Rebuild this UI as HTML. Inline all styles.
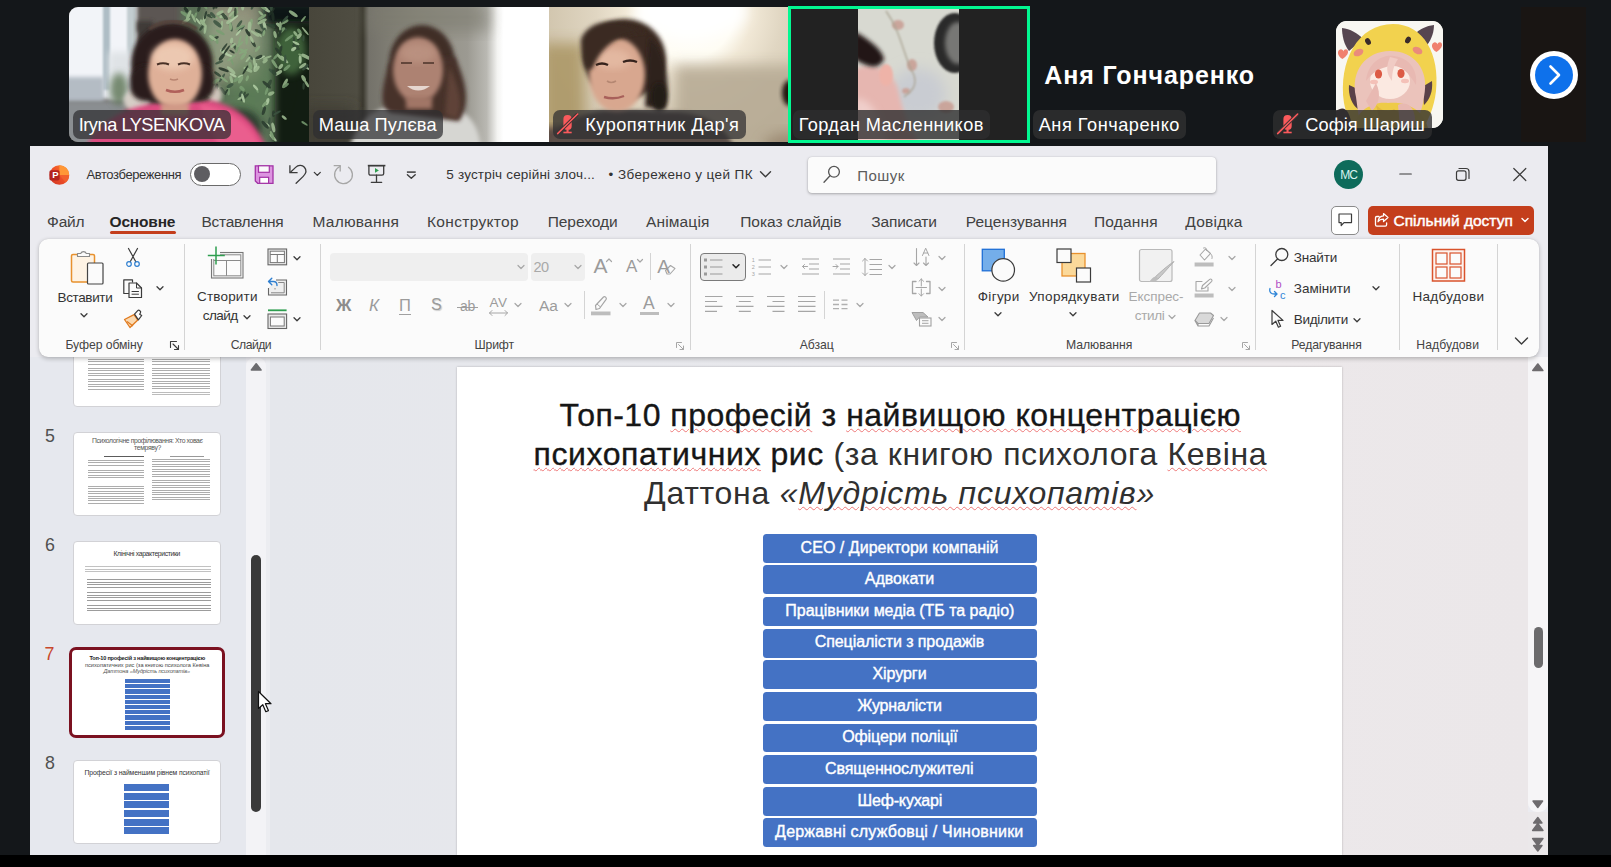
<!DOCTYPE html>
<html lang="uk">
<head>
<meta charset="utf-8">
<title>Zoom – PowerPoint</title>
<style>
*{box-sizing:border-box;margin:0;padding:0}
html,body{width:1611px;height:867px;overflow:hidden;background:#14171a;font-family:"Liberation Sans",sans-serif;color:#262626}
#stage{position:absolute;left:0;top:0;width:1611px;height:867px;overflow:hidden;background:#14171a}
.a{position:absolute}
.t{position:absolute;white-space:nowrap;line-height:1;transform-origin:0 0}
svg{position:absolute;overflow:visible}
/* ---------- video strip ---------- */
.tile{position:absolute;top:7px;height:135px;width:240px;overflow:hidden}
.tile svg{left:0;top:0}
.nm{position:absolute;top:110px;height:29px;border-radius:7px;background:rgba(46,46,48,.72)}
.nmt{color:#fff;font-size:19px}
/* ---------- ppt window ---------- */
#ppt{position:absolute;left:0;top:0;width:1611px;height:867px}
#pptbg{position:absolute;left:30px;top:146px;width:1518px;height:709px;background:#ebebf0}
#bottombar{position:absolute;left:0;top:855px;width:1611px;height:12px;background:#000}
.tab{font-size:15.5px;color:#414141}
.rl{font-size:13.5px;color:#333}
.gl{font-size:12px;color:#444}
.dis{color:#a9a9a9}
.sep{position:absolute;width:1px;background:#d4d4d4}
.ic{stroke:#3b3b3b;fill:none;stroke-width:1.1;stroke-linecap:round;stroke-linejoin:round}
.icg{stroke:#a6a6a6;fill:none;stroke-width:1.1;stroke-linecap:round;stroke-linejoin:round}
.chev{stroke:#3b3b3b;fill:none;stroke-width:1.3;stroke-linecap:round;stroke-linejoin:round}
.chevg{stroke:#a6a6a6;fill:none;stroke-width:1.2;stroke-linecap:round;stroke-linejoin:round}
.thumb{position:absolute;left:72.500px;width:148.500px;background:#fff;border:1px solid #d2d2d6;border-radius:4px;overflow:hidden}
.sn{font-size:17px;color:#505050}
.bar{position:absolute;left:763px;width:274px;height:28.9px;border-radius:3.5px;background:#4472c4}
.bt{color:#fff;font-size:16px;-webkit-text-stroke:.4px #fff}
.h1{font-size:32px;color:#161616}
.wv{text-decoration:underline wavy #e77;text-decoration-thickness:.9px;text-underline-offset:1.800px}
</style>
</head>
<body>
<div id="stage">
<!-- ================= VIDEO STRIP ================= -->
<svg width="0" height="0" style="left:0;top:0">
<defs>
<filter id="b2" x="-20%" y="-20%" width="140%" height="140%"><feGaussianBlur stdDeviation="2"/></filter>
<filter id="b3" x="-20%" y="-20%" width="140%" height="140%"><feGaussianBlur stdDeviation="3.5"/></filter>
<filter id="b6" x="-30%" y="-30%" width="160%" height="160%"><feGaussianBlur stdDeviation="7"/></filter>
<filter id="b05" x="-20%" y="-20%" width="140%" height="140%"><feGaussianBlur stdDeviation=".6"/></filter>
<filter id="b1" x="-20%" y="-20%" width="140%" height="140%"><feGaussianBlur stdDeviation="1"/></filter>
</defs>
</svg>

<!-- tile 1 : Iryna -->
<div class="tile" style="left:69px;border-radius:9px 0 0 9px;background:#6b6a62">
<svg width="240" height="135" viewBox="0 0 240 135">
<rect width="240" height="135" fill="#5c5753"/>
<!-- window -->
<rect x="-5" y="-5" width="77" height="97" fill="#f2f4f8" filter="url(#b2)"/>
<rect x="34" y="-5" width="7" height="88" fill="#aebdc5" filter="url(#b1)"/>
<rect x="58" y="-5" width="9" height="70" fill="#c3cdd0" filter="url(#b1)"/>
<rect x="40" y="45" width="26" height="50" fill="#dfe3e6" filter="url(#b3)"/>
<rect x="-5" y="70" width="40" height="26" fill="#b4bcc4" filter="url(#b2)"/>
<rect x="-5" y="94" width="62" height="45" fill="#8a8e91" filter="url(#b2)"/>
<ellipse cx="50" cy="82" rx="9" ry="16" fill="#5b7353" filter="url(#b3)" opacity=".8"/>
<!-- wall / cabinet behind -->
<rect x="68" y="-5" width="72" height="30" fill="#5b5753" filter="url(#b2)"/>
<rect x="68" y="14" width="16" height="36" fill="#3f3b39" filter="url(#b2)"/>
<!-- plant -->
<rect x="112" y="-5" width="135" height="145" fill="#5a6f56" filter="url(#b3)"/>
<rect x="140" y="-5" width="50" height="80" fill="#a89c8a" filter="url(#b6)" opacity=".75"/>
<ellipse cx="160" cy="38" rx="36" ry="30" fill="#8aa482" opacity=".5" filter="url(#b6)"/>
<ellipse cx="186" cy="82" rx="28" ry="32" fill="#5d8258" opacity=".6" filter="url(#b6)"/>
<rect x="196" y="-5" width="55" height="22" fill="#0f1612" filter="url(#b3)"/>
<rect x="206" y="14" width="45" height="130" fill="#0c1411" filter="url(#b3)" opacity=".92"/>
<ellipse cx="222" cy="44" rx="15" ry="24" fill="#4f7a4a" opacity=".75" filter="url(#b3)"/>
<ellipse cx="170" cy="120" rx="22" ry="18" fill="#1c2c22" opacity=".75" filter="url(#b3)"/>
<g filter="url(#b05)" opacity=".85"><ellipse cx="152.8" cy="18.2" rx="4.6" ry="1.1" fill="#9dbb90" transform="rotate(95 152.8 18.2)"/><ellipse cx="226.6" cy="26.8" rx="3.2" ry="1.4" fill="#9dbb90" transform="rotate(54 226.6 26.8)"/><ellipse cx="216.2" cy="14.6" rx="3.6" ry="1.6" fill="#7a9e72" transform="rotate(153 216.2 14.6)"/><ellipse cx="182.1" cy="15.8" rx="4.0" ry="1.5" fill="#86a97c" transform="rotate(100 182.1 15.8)"/><ellipse cx="135.7" cy="11.1" rx="4.8" ry="1.5" fill="#a4c097" transform="rotate(107 135.7 11.1)"/><ellipse cx="165.9" cy="40.1" rx="4.5" ry="1.4" fill="#314634" transform="rotate(62 165.9 40.1)"/><ellipse cx="174.4" cy="44.0" rx="4.1" ry="1.5" fill="#86a97c" transform="rotate(30 174.4 44.0)"/><ellipse cx="207.4" cy="18.4" rx="4.2" ry="1.0" fill="#223126" transform="rotate(114 207.4 18.4)"/><ellipse cx="154.9" cy="44.9" rx="4.2" ry="1.7" fill="#b3cfa6" transform="rotate(30 154.9 44.9)"/><ellipse cx="171.7" cy="87.0" rx="3.2" ry="1.6" fill="#3a5340" transform="rotate(111 171.7 87.0)"/><ellipse cx="196.3" cy="1.0" rx="4.2" ry="1.2" fill="#b3cfa6" transform="rotate(36 196.3 1.0)"/><ellipse cx="168.6" cy="71.6" rx="5.2" ry="1.7" fill="#7a9e72" transform="rotate(141 168.6 71.6)"/><ellipse cx="141.1" cy="9.1" rx="3.4" ry="1.6" fill="#314634" transform="rotate(22 141.1 9.1)"/><ellipse cx="145.1" cy="-1.5" rx="4.0" ry="1.3" fill="#2a3b2d" transform="rotate(99 145.1 -1.5)"/><ellipse cx="169.5" cy="114.7" rx="4.7" ry="1.5" fill="#7a9e72" transform="rotate(76 169.5 114.7)"/><ellipse cx="191.9" cy="6.3" rx="3.2" ry="1.2" fill="#9dbb90" transform="rotate(43 191.9 6.3)"/><ellipse cx="159.4" cy="83.0" rx="5.4" ry="1.5" fill="#7a9e72" transform="rotate(86 159.4 83.0)"/><ellipse cx="237.1" cy="60.4" rx="4.2" ry="1.1" fill="#b3cfa6" transform="rotate(34 237.1 60.4)"/><ellipse cx="172.3" cy="90.7" rx="4.3" ry="1.2" fill="#a4c097" transform="rotate(153 172.3 90.7)"/><ellipse cx="193.0" cy="10.2" rx="5.1" ry="1.5" fill="#86a97c" transform="rotate(147 193.0 10.2)"/><ellipse cx="140.1" cy="106.7" rx="5.1" ry="1.7" fill="#314634" transform="rotate(135 140.1 106.7)"/><ellipse cx="204.1" cy="130.6" rx="5.0" ry="1.4" fill="#b3cfa6" transform="rotate(47 204.1 130.6)"/><ellipse cx="168.4" cy="123.6" rx="5.4" ry="1.3" fill="#86a97c" transform="rotate(51 168.4 123.6)"/><ellipse cx="154.6" cy="62.7" rx="5.5" ry="1.5" fill="#223126" transform="rotate(20 154.6 62.7)"/><ellipse cx="172.2" cy="21.9" rx="5.0" ry="1.3" fill="#3a5340" transform="rotate(132 172.2 21.9)"/><ellipse cx="186.4" cy="60.4" rx="4.6" ry="1.6" fill="#b3cfa6" transform="rotate(103 186.4 60.4)"/><ellipse cx="236.3" cy="24.1" rx="5.2" ry="1.0" fill="#a4c097" transform="rotate(50 236.3 24.1)"/><ellipse cx="153.1" cy="70.9" rx="5.1" ry="1.1" fill="#3a5340" transform="rotate(124 153.1 70.9)"/><ellipse cx="209.8" cy="18.1" rx="3.4" ry="1.6" fill="#a4c097" transform="rotate(37 209.8 18.1)"/><ellipse cx="178.9" cy="62.7" rx="4.9" ry="1.8" fill="#9dbb90" transform="rotate(28 178.9 62.7)"/><ellipse cx="209.3" cy="66.0" rx="4.4" ry="1.7" fill="#a4c097" transform="rotate(148 209.3 66.0)"/><ellipse cx="234.6" cy="79.2" rx="3.5" ry="1.2" fill="#314634" transform="rotate(91 234.6 79.2)"/><ellipse cx="200.1" cy="115.5" rx="5.4" ry="1.2" fill="#3a5340" transform="rotate(98 200.1 115.5)"/><ellipse cx="129.3" cy="14.3" rx="4.1" ry="1.1" fill="#b3cfa6" transform="rotate(54 129.3 14.3)"/><ellipse cx="202.2" cy="86.5" rx="3.4" ry="1.8" fill="#9dbb90" transform="rotate(155 202.2 86.5)"/><ellipse cx="162.2" cy="63.3" rx="5.5" ry="1.7" fill="#a4c097" transform="rotate(43 162.2 63.3)"/><ellipse cx="162.9" cy="54.5" rx="3.9" ry="1.1" fill="#7a9e72" transform="rotate(71 162.9 54.5)"/><ellipse cx="167.5" cy="0.4" rx="3.8" ry="1.6" fill="#86a97c" transform="rotate(92 167.5 0.4)"/><ellipse cx="234.4" cy="12.0" rx="3.7" ry="1.0" fill="#86a97c" transform="rotate(129 234.4 12.0)"/><ellipse cx="231.2" cy="52.4" rx="4.3" ry="1.5" fill="#b3cfa6" transform="rotate(89 231.2 52.4)"/><ellipse cx="165.6" cy="7.7" rx="5.3" ry="1.6" fill="#86a97c" transform="rotate(132 165.6 7.7)"/><ellipse cx="154.7" cy="72.1" rx="5.3" ry="1.2" fill="#86a97c" transform="rotate(38 154.7 72.1)"/><ellipse cx="178.9" cy="25.6" rx="4.1" ry="1.6" fill="#223126" transform="rotate(58 178.9 25.6)"/><ellipse cx="116.7" cy="0.5" rx="4.3" ry="1.9" fill="#7a9e72" transform="rotate(92 116.7 0.5)"/><ellipse cx="175.8" cy="90.2" rx="5.5" ry="1.3" fill="#314634" transform="rotate(137 175.8 90.2)"/><ellipse cx="163.0" cy="44.6" rx="3.1" ry="1.1" fill="#223126" transform="rotate(30 163.0 44.6)"/><ellipse cx="166.3" cy="5.4" rx="4.7" ry="1.3" fill="#314634" transform="rotate(91 166.3 5.4)"/><ellipse cx="199.3" cy="4.1" rx="3.5" ry="1.2" fill="#b3cfa6" transform="rotate(21 199.3 4.1)"/><ellipse cx="234.6" cy="71.3" rx="3.6" ry="1.9" fill="#9dbb90" transform="rotate(63 234.6 71.3)"/><ellipse cx="154.3" cy="9.2" rx="3.7" ry="1.6" fill="#2a3b2d" transform="rotate(55 154.3 9.2)"/><ellipse cx="145.3" cy="10.0" rx="4.0" ry="1.0" fill="#86a97c" transform="rotate(23 145.3 10.0)"/><ellipse cx="122.6" cy="126.3" rx="3.4" ry="1.8" fill="#b3cfa6" transform="rotate(130 122.6 126.3)"/><ellipse cx="202.8" cy="64.2" rx="3.7" ry="1.6" fill="#3a5340" transform="rotate(40 202.8 64.2)"/><ellipse cx="204.5" cy="106.8" rx="3.3" ry="1.5" fill="#2a3b2d" transform="rotate(91 204.5 106.8)"/><ellipse cx="216.1" cy="76.3" rx="5.2" ry="1.6" fill="#9dbb90" transform="rotate(117 216.1 76.3)"/><ellipse cx="232.9" cy="48.5" rx="4.1" ry="1.0" fill="#86a97c" transform="rotate(23 232.9 48.5)"/><ellipse cx="173.7" cy="-1.6" rx="5.0" ry="1.7" fill="#a4c097" transform="rotate(90 173.7 -1.6)"/><ellipse cx="143.8" cy="8.0" rx="3.7" ry="1.7" fill="#3a5340" transform="rotate(49 143.8 8.0)"/><ellipse cx="174.2" cy="49.3" rx="4.2" ry="1.6" fill="#86a97c" transform="rotate(127 174.2 49.3)"/><ellipse cx="183.5" cy="-0.3" rx="3.2" ry="1.2" fill="#3a5340" transform="rotate(114 183.5 -0.3)"/><ellipse cx="148.6" cy="67.2" rx="4.2" ry="1.4" fill="#314634" transform="rotate(37 148.6 67.2)"/><ellipse cx="151.3" cy="9.5" rx="4.2" ry="1.3" fill="#7a9e72" transform="rotate(31 151.3 9.5)"/><ellipse cx="237.2" cy="49.8" rx="5.3" ry="1.8" fill="#a4c097" transform="rotate(30 237.2 49.8)"/><ellipse cx="188.0" cy="82.6" rx="3.7" ry="1.1" fill="#7a9e72" transform="rotate(71 188.0 82.6)"/><ellipse cx="161.7" cy="19.3" rx="5.4" ry="1.6" fill="#3a5340" transform="rotate(77 161.7 19.3)"/><ellipse cx="155.3" cy="40.4" rx="5.1" ry="1.0" fill="#2a3b2d" transform="rotate(125 155.3 40.4)"/><ellipse cx="230.4" cy="24.2" rx="3.0" ry="1.7" fill="#7a9e72" transform="rotate(55 230.4 24.2)"/><ellipse cx="237.8" cy="76.9" rx="3.9" ry="1.4" fill="#9dbb90" transform="rotate(59 237.8 76.9)"/><ellipse cx="192.0" cy="18.0" rx="5.4" ry="1.4" fill="#3a5340" transform="rotate(64 192.0 18.0)"/><ellipse cx="202.7" cy="4.6" rx="4.8" ry="1.4" fill="#223126" transform="rotate(125 202.7 4.6)"/><ellipse cx="147.5" cy="32.3" rx="4.8" ry="1.6" fill="#7a9e72" transform="rotate(77 147.5 32.3)"/><ellipse cx="182.2" cy="50.8" rx="3.4" ry="1.1" fill="#3a5340" transform="rotate(49 182.2 50.8)"/><ellipse cx="181.3" cy="58.7" rx="3.8" ry="1.7" fill="#86a97c" transform="rotate(80 181.3 58.7)"/><ellipse cx="164.1" cy="68.2" rx="3.9" ry="1.3" fill="#b3cfa6" transform="rotate(29 164.1 68.2)"/><ellipse cx="146.1" cy="31.3" rx="4.0" ry="1.4" fill="#2a3b2d" transform="rotate(154 146.1 31.3)"/><ellipse cx="208.2" cy="105.8" rx="4.2" ry="1.1" fill="#3a5340" transform="rotate(150 208.2 105.8)"/><ellipse cx="234.5" cy="31.3" rx="3.3" ry="1.1" fill="#3a5340" transform="rotate(93 234.5 31.3)"/><ellipse cx="178.3" cy="71.3" rx="3.1" ry="1.4" fill="#86a97c" transform="rotate(111 178.3 71.3)"/><ellipse cx="174.8" cy="88.4" rx="4.1" ry="1.2" fill="#314634" transform="rotate(113 174.8 88.4)"/><ellipse cx="174.1" cy="91.2" rx="4.8" ry="1.3" fill="#b3cfa6" transform="rotate(75 174.1 91.2)"/><ellipse cx="205.1" cy="65.7" rx="3.5" ry="1.9" fill="#314634" transform="rotate(64 205.1 65.7)"/><ellipse cx="170.6" cy="33.5" rx="5.2" ry="1.1" fill="#86a97c" transform="rotate(107 170.6 33.5)"/><ellipse cx="126.3" cy="8.6" rx="3.4" ry="1.2" fill="#7a9e72" transform="rotate(111 126.3 8.6)"/><ellipse cx="159.7" cy="48.1" rx="3.8" ry="1.2" fill="#b3cfa6" transform="rotate(20 159.7 48.1)"/><ellipse cx="207.6" cy="48.9" rx="4.9" ry="1.3" fill="#7a9e72" transform="rotate(133 207.6 48.9)"/><ellipse cx="168.2" cy="41.3" rx="4.8" ry="1.4" fill="#7a9e72" transform="rotate(108 168.2 41.3)"/><ellipse cx="117.1" cy="2.7" rx="3.2" ry="1.8" fill="#223126" transform="rotate(56 117.1 2.7)"/><ellipse cx="157.7" cy="42.9" rx="5.4" ry="1.0" fill="#223126" transform="rotate(125 157.7 42.9)"/><ellipse cx="216.1" cy="12.4" rx="4.8" ry="1.4" fill="#3a5340" transform="rotate(129 216.1 12.4)"/><ellipse cx="214.7" cy="15.8" rx="4.2" ry="1.0" fill="#86a97c" transform="rotate(150 214.7 15.8)"/><ellipse cx="188.5" cy="41.9" rx="3.8" ry="1.3" fill="#86a97c" transform="rotate(130 188.5 41.9)"/><ellipse cx="161.4" cy="19.4" rx="4.0" ry="1.6" fill="#86a97c" transform="rotate(87 161.4 19.4)"/><ellipse cx="235.5" cy="116.4" rx="3.7" ry="1.1" fill="#7a9e72" transform="rotate(33 235.5 116.4)"/><ellipse cx="133.8" cy="15.8" rx="4.2" ry="1.8" fill="#9dbb90" transform="rotate(53 133.8 15.8)"/><ellipse cx="210.2" cy="37.4" rx="3.7" ry="1.2" fill="#7a9e72" transform="rotate(56 210.2 37.4)"/><ellipse cx="143.2" cy="30.9" rx="3.4" ry="1.8" fill="#7a9e72" transform="rotate(101 143.2 30.9)"/><ellipse cx="143.7" cy="31.0" rx="4.3" ry="1.6" fill="#9dbb90" transform="rotate(34 143.7 31.0)"/><ellipse cx="215.2" cy="110.6" rx="3.1" ry="1.3" fill="#a4c097" transform="rotate(37 215.2 110.6)"/><ellipse cx="136.5" cy="8.1" rx="4.3" ry="1.2" fill="#2a3b2d" transform="rotate(104 136.5 8.1)"/><ellipse cx="190.1" cy="27.2" rx="3.9" ry="1.1" fill="#a4c097" transform="rotate(49 190.1 27.2)"/><ellipse cx="204.3" cy="120.5" rx="5.0" ry="1.7" fill="#a4c097" transform="rotate(77 204.3 120.5)"/><ellipse cx="151.3" cy="25.3" rx="5.0" ry="1.5" fill="#7a9e72" transform="rotate(29 151.3 25.3)"/><ellipse cx="195.7" cy="18.7" rx="4.3" ry="1.6" fill="#b3cfa6" transform="rotate(76 195.7 18.7)"/><ellipse cx="196.1" cy="54.0" rx="3.1" ry="1.7" fill="#9dbb90" transform="rotate(144 196.1 54.0)"/><ellipse cx="215.4" cy="52.4" rx="5.2" ry="1.4" fill="#a4c097" transform="rotate(43 215.4 52.4)"/><ellipse cx="132.4" cy="21.0" rx="3.2" ry="1.3" fill="#314634" transform="rotate(125 132.4 21.0)"/><ellipse cx="227.0" cy="40.1" rx="4.5" ry="1.6" fill="#314634" transform="rotate(32 227.0 40.1)"/><ellipse cx="189.5" cy="24.3" rx="4.2" ry="1.5" fill="#314634" transform="rotate(26 189.5 24.3)"/><ellipse cx="160.3" cy="14.5" rx="3.6" ry="1.7" fill="#a4c097" transform="rotate(146 160.3 14.5)"/><ellipse cx="152.8" cy="50.2" rx="4.1" ry="1.8" fill="#223126" transform="rotate(129 152.8 50.2)"/><ellipse cx="185.4" cy="55.0" rx="4.6" ry="1.4" fill="#a4c097" transform="rotate(81 185.4 55.0)"/><ellipse cx="236.3" cy="60.3" rx="4.1" ry="1.6" fill="#3a5340" transform="rotate(135 236.3 60.3)"/><ellipse cx="162.4" cy="7.0" rx="3.9" ry="1.3" fill="#9dbb90" transform="rotate(132 162.4 7.0)"/><ellipse cx="228.2" cy="40.0" rx="4.8" ry="1.1" fill="#314634" transform="rotate(125 228.2 40.0)"/><ellipse cx="115.3" cy="6.9" rx="4.5" ry="1.6" fill="#7a9e72" transform="rotate(35 115.3 6.9)"/><ellipse cx="198.5" cy="94.6" rx="3.6" ry="1.7" fill="#b3cfa6" transform="rotate(105 198.5 94.6)"/><ellipse cx="225.0" cy="34.8" rx="5.0" ry="1.1" fill="#314634" transform="rotate(90 225.0 34.8)"/><ellipse cx="186.6" cy="80.5" rx="3.6" ry="1.3" fill="#b3cfa6" transform="rotate(48 186.6 80.5)"/><ellipse cx="197.6" cy="118.0" rx="3.4" ry="1.7" fill="#b3cfa6" transform="rotate(36 197.6 118.0)"/><ellipse cx="233.7" cy="58.7" rx="4.3" ry="1.6" fill="#a4c097" transform="rotate(145 233.7 58.7)"/><ellipse cx="191.4" cy="50.8" rx="5.0" ry="1.2" fill="#b3cfa6" transform="rotate(159 191.4 50.8)"/><ellipse cx="153.7" cy="8.9" rx="3.6" ry="1.6" fill="#a4c097" transform="rotate(154 153.7 8.9)"/><ellipse cx="144.0" cy="83.7" rx="5.5" ry="1.5" fill="#9dbb90" transform="rotate(113 144.0 83.7)"/><ellipse cx="206.1" cy="27.7" rx="3.7" ry="1.6" fill="#9dbb90" transform="rotate(78 206.1 27.7)"/><ellipse cx="194.3" cy="1.0" rx="3.0" ry="1.3" fill="#86a97c" transform="rotate(35 194.3 1.0)"/><ellipse cx="164.1" cy="38.4" rx="3.3" ry="1.3" fill="#9dbb90" transform="rotate(136 164.1 38.4)"/><ellipse cx="230.0" cy="30.6" rx="3.4" ry="1.1" fill="#223126" transform="rotate(109 230.0 30.6)"/><ellipse cx="162.6" cy="33.4" rx="3.0" ry="1.6" fill="#a4c097" transform="rotate(99 162.6 33.4)"/><ellipse cx="179.0" cy="52.4" rx="3.6" ry="1.1" fill="#a4c097" transform="rotate(129 179.0 52.4)"/><ellipse cx="194.8" cy="24.4" rx="4.0" ry="1.5" fill="#3a5340" transform="rotate(110 194.8 24.4)"/><ellipse cx="214.5" cy="21.4" rx="3.8" ry="1.3" fill="#3a5340" transform="rotate(27 214.5 21.4)"/><ellipse cx="202.1" cy="-1.1" rx="5.1" ry="1.7" fill="#3a5340" transform="rotate(85 202.1 -1.1)"/><ellipse cx="193.1" cy="14.5" rx="5.2" ry="1.8" fill="#9dbb90" transform="rotate(152 193.1 14.5)"/><ellipse cx="145.4" cy="84.0" rx="5.4" ry="1.2" fill="#b3cfa6" transform="rotate(143 145.4 84.0)"/><ellipse cx="161.0" cy="78.6" rx="3.9" ry="1.8" fill="#3a5340" transform="rotate(149 161.0 78.6)"/><ellipse cx="171.5" cy="69.1" rx="3.0" ry="1.0" fill="#b3cfa6" transform="rotate(154 171.5 69.1)"/><ellipse cx="211.4" cy="50.5" rx="4.5" ry="1.5" fill="#9dbb90" transform="rotate(44 211.4 50.5)"/><ellipse cx="129.9" cy="1.9" rx="3.1" ry="1.6" fill="#2a3b2d" transform="rotate(109 129.9 1.9)"/><ellipse cx="224.3" cy="6.8" rx="5.3" ry="1.8" fill="#9dbb90" transform="rotate(35 224.3 6.8)"/><ellipse cx="116.3" cy="125.2" rx="4.9" ry="1.1" fill="#3a5340" transform="rotate(125 116.3 125.2)"/><ellipse cx="124.6" cy="11.1" rx="4.9" ry="1.2" fill="#9dbb90" transform="rotate(65 124.6 11.1)"/><ellipse cx="187.9" cy="61.8" rx="3.7" ry="1.7" fill="#a4c097" transform="rotate(130 187.9 61.8)"/><ellipse cx="209.4" cy="44.5" rx="4.8" ry="1.5" fill="#2a3b2d" transform="rotate(50 209.4 44.5)"/><ellipse cx="184.4" cy="36.5" rx="4.1" ry="1.5" fill="#2a3b2d" transform="rotate(60 184.4 36.5)"/><ellipse cx="174.3" cy="44.5" rx="5.1" ry="1.2" fill="#86a97c" transform="rotate(152 174.3 44.5)"/><ellipse cx="230.2" cy="29.0" rx="3.4" ry="1.8" fill="#a4c097" transform="rotate(127 230.2 29.0)"/><ellipse cx="162.6" cy="50.9" rx="5.2" ry="1.1" fill="#86a97c" transform="rotate(144 162.6 50.9)"/><ellipse cx="150.2" cy="55.4" rx="4.4" ry="1.2" fill="#3a5340" transform="rotate(158 150.2 55.4)"/><ellipse cx="198.8" cy="79.1" rx="3.1" ry="1.5" fill="#3a5340" transform="rotate(93 198.8 79.1)"/><ellipse cx="195.4" cy="97.4" rx="3.4" ry="1.4" fill="#86a97c" transform="rotate(128 195.4 97.4)"/><ellipse cx="154.1" cy="84.1" rx="4.7" ry="1.5" fill="#314634" transform="rotate(57 154.1 84.1)"/><ellipse cx="203.1" cy="128.6" rx="4.8" ry="1.5" fill="#86a97c" transform="rotate(69 203.1 128.6)"/><ellipse cx="144.6" cy="126.0" rx="3.4" ry="1.6" fill="#86a97c" transform="rotate(47 144.6 126.0)"/><ellipse cx="160.9" cy="2.5" rx="4.0" ry="1.7" fill="#b3cfa6" transform="rotate(117 160.9 2.5)"/><ellipse cx="170.4" cy="17.0" rx="4.5" ry="1.4" fill="#3a5340" transform="rotate(124 170.4 17.0)"/><ellipse cx="200.3" cy="76.7" rx="4.6" ry="1.8" fill="#314634" transform="rotate(114 200.3 76.7)"/><ellipse cx="197.6" cy="84.0" rx="4.1" ry="1.3" fill="#7a9e72" transform="rotate(108 197.6 84.0)"/><ellipse cx="201.8" cy="19.0" rx="5.1" ry="1.4" fill="#314634" transform="rotate(23 201.8 19.0)"/><ellipse cx="224.7" cy="42.0" rx="3.0" ry="1.7" fill="#b3cfa6" transform="rotate(147 224.7 42.0)"/><ellipse cx="180.5" cy="19.6" rx="5.0" ry="1.8" fill="#a4c097" transform="rotate(93 180.5 19.6)"/><ellipse cx="169.6" cy="25.5" rx="4.2" ry="1.0" fill="#b3cfa6" transform="rotate(131 169.6 25.5)"/><ellipse cx="198.2" cy="50.6" rx="4.9" ry="1.1" fill="#9dbb90" transform="rotate(158 198.2 50.6)"/><ellipse cx="119.7" cy="8.1" rx="5.3" ry="1.6" fill="#9dbb90" transform="rotate(114 119.7 8.1)"/><ellipse cx="140.3" cy="97.4" rx="4.3" ry="1.2" fill="#86a97c" transform="rotate(132 140.3 97.4)"/><ellipse cx="212.6" cy="23.9" rx="4.6" ry="1.6" fill="#7a9e72" transform="rotate(134 212.6 23.9)"/><ellipse cx="171.0" cy="37.4" rx="4.4" ry="1.1" fill="#86a97c" transform="rotate(137 171.0 37.4)"/><ellipse cx="135.4" cy="-1.6" rx="4.8" ry="1.3" fill="#7a9e72" transform="rotate(54 135.4 -1.6)"/><ellipse cx="173.1" cy="81.5" rx="3.2" ry="1.8" fill="#7a9e72" transform="rotate(41 173.1 81.5)"/><ellipse cx="119.2" cy="108.9" rx="5.0" ry="1.1" fill="#2a3b2d" transform="rotate(136 119.2 108.9)"/><ellipse cx="194.8" cy="26.1" rx="3.2" ry="1.3" fill="#86a97c" transform="rotate(105 194.8 26.1)"/><ellipse cx="210.9" cy="25.9" rx="4.0" ry="1.5" fill="#2a3b2d" transform="rotate(105 210.9 25.9)"/><ellipse cx="196.2" cy="117.8" rx="5.0" ry="1.8" fill="#2a3b2d" transform="rotate(48 196.2 117.8)"/><ellipse cx="205.5" cy="56.8" rx="5.2" ry="1.5" fill="#86a97c" transform="rotate(57 205.5 56.8)"/><ellipse cx="171.6" cy="72.7" rx="4.2" ry="1.8" fill="#86a97c" transform="rotate(118 171.6 72.7)"/><ellipse cx="217.9" cy="60.7" rx="4.4" ry="1.6" fill="#7a9e72" transform="rotate(138 217.9 60.7)"/><ellipse cx="157.4" cy="84.6" rx="3.1" ry="1.0" fill="#2a3b2d" transform="rotate(123 157.4 84.6)"/><ellipse cx="176.3" cy="62.9" rx="5.2" ry="1.0" fill="#223126" transform="rotate(121 176.3 62.9)"/><ellipse cx="227.0" cy="36.1" rx="3.9" ry="1.2" fill="#b3cfa6" transform="rotate(27 227.0 36.1)"/><ellipse cx="216.3" cy="52.1" rx="4.3" ry="1.2" fill="#3a5340" transform="rotate(91 216.3 52.1)"/><ellipse cx="211.8" cy="42.3" rx="3.8" ry="1.3" fill="#2a3b2d" transform="rotate(102 211.8 42.3)"/><ellipse cx="162.3" cy="72.3" rx="4.0" ry="1.5" fill="#9dbb90" transform="rotate(76 162.3 72.3)"/><ellipse cx="194.9" cy="103.7" rx="4.5" ry="1.6" fill="#2a3b2d" transform="rotate(108 194.9 103.7)"/><ellipse cx="138.8" cy="87.4" rx="4.1" ry="1.7" fill="#9dbb90" transform="rotate(34 138.8 87.4)"/><ellipse cx="165.1" cy="11.5" rx="5.3" ry="1.0" fill="#b3cfa6" transform="rotate(142 165.1 11.5)"/><ellipse cx="182.8" cy="32.6" rx="3.8" ry="1.4" fill="#a4c097" transform="rotate(65 182.8 32.6)"/><ellipse cx="117.0" cy="13.9" rx="5.0" ry="1.5" fill="#9dbb90" transform="rotate(149 117.0 13.9)"/><ellipse cx="197.7" cy="77.6" rx="5.5" ry="1.6" fill="#2a3b2d" transform="rotate(42 197.7 77.6)"/><ellipse cx="146.7" cy="74.2" rx="4.1" ry="1.7" fill="#86a97c" transform="rotate(149 146.7 74.2)"/><ellipse cx="203.9" cy="9.3" rx="4.6" ry="1.6" fill="#223126" transform="rotate(84 203.9 9.3)"/><ellipse cx="189.9" cy="50.1" rx="3.8" ry="1.5" fill="#2a3b2d" transform="rotate(154 189.9 50.1)"/><ellipse cx="171.2" cy="20.3" rx="5.4" ry="1.1" fill="#7a9e72" transform="rotate(154 171.2 20.3)"/><ellipse cx="147.3" cy="81.3" rx="4.6" ry="1.7" fill="#2a3b2d" transform="rotate(104 147.3 81.3)"/><ellipse cx="216.7" cy="78.6" rx="3.8" ry="1.4" fill="#7a9e72" transform="rotate(144 216.7 78.6)"/><ellipse cx="147.7" cy="-1.8" rx="3.7" ry="1.4" fill="#2a3b2d" transform="rotate(102 147.7 -1.8)"/><ellipse cx="148.4" cy="16.8" rx="5.2" ry="1.9" fill="#3a5340" transform="rotate(41 148.4 16.8)"/><ellipse cx="155.7" cy="9.4" rx="4.4" ry="1.7" fill="#314634" transform="rotate(48 155.7 9.4)"/><ellipse cx="151.0" cy="5.7" rx="4.0" ry="1.6" fill="#9dbb90" transform="rotate(150 151.0 5.7)"/><ellipse cx="211.7" cy="59.6" rx="3.2" ry="1.7" fill="#a4c097" transform="rotate(128 211.7 59.6)"/><ellipse cx="177.7" cy="32.8" rx="5.1" ry="1.3" fill="#86a97c" transform="rotate(91 177.7 32.8)"/><ellipse cx="136.2" cy="22.2" rx="4.8" ry="1.3" fill="#a4c097" transform="rotate(99 136.2 22.2)"/><ellipse cx="220.0" cy="31.0" rx="5.3" ry="1.4" fill="#7a9e72" transform="rotate(141 220.0 31.0)"/><ellipse cx="211.2" cy="18.9" rx="4.5" ry="1.3" fill="#9dbb90" transform="rotate(93 211.2 18.9)"/><ellipse cx="185.9" cy="26.6" rx="5.3" ry="1.3" fill="#a4c097" transform="rotate(34 185.9 26.6)"/></g>
<!-- chair -->
<ellipse cx="68" cy="94" rx="13" ry="12" fill="#d6cec6" filter="url(#b2)"/>
<ellipse cx="146" cy="88" rx="7" ry="9" fill="#d0c6bc" filter="url(#b2)"/>
<!-- pink top -->
<path d="M16 142 C30 112 60 99 92 95 L140 93 C165 98 186 112 198 142 Z" fill="#dd4b80" filter="url(#b2)"/>
<path d="M130 97 C160 101 180 115 192 140 L150 140 Z" fill="#ee6391" filter="url(#b2)" opacity=".8"/>
<!-- hair -->
<ellipse cx="103" cy="57" rx="41" ry="41" fill="#2b1e1a" filter="url(#b2)"/>
<rect x="61" y="58" width="84" height="36" rx="15" fill="#2b1e1a" filter="url(#b2)"/>
<path d="M80 22 C95 12 115 12 128 22" stroke="#55423a" stroke-width="3" fill="none" filter="url(#b1)"/>
<!-- face -->
<ellipse cx="106" cy="67" rx="27" ry="35" fill="#dfb098" filter="url(#b2)"/>
<ellipse cx="104" cy="50" rx="21" ry="13" fill="#efcdb6" filter="url(#b3)" opacity=".85"/>
<rect x="92" y="97" width="28" height="12" fill="#d09a86" filter="url(#b2)"/>
<g filter="url(#b05)"><path d="M88 57.500q6-2.500 12 0M109 57.500q6-2.500 12 0" stroke="#4a3028" stroke-width="2" fill="none"/><path d="M97 83q9 3.500 18 0" stroke="#b0605a" stroke-width="2.600" fill="none"/><path d="M101 72q4 2 8 0" stroke="#b88470" stroke-width="1.600" fill="none"/></g>
</svg>
</div>

<!-- tile 2 : Masha -->
<div class="tile" style="left:309px;background:#8a887c">
<svg width="240" height="135" viewBox="0 0 240 135">
<defs><linearGradient id="g2" x1="0" x2="1" y1="0" y2="0">
<stop offset="0" stop-color="#48463b"/><stop offset=".2" stop-color="#4f4d42"/><stop offset=".225" stop-color="#3b392f"/><stop offset=".25" stop-color="#74726a"/><stop offset=".45" stop-color="#8e8c80"/><stop offset=".66" stop-color="#9c9a92"/><stop offset=".74" stop-color="#b9b8b2"/><stop offset=".785" stop-color="#f4f4f2"/><stop offset=".81" stop-color="#ffffff"/><stop offset="1" stop-color="#ffffff"/></linearGradient></defs>
<rect width="240" height="135" fill="url(#g2)"/>
<rect x="-5" y="100" width="50" height="45" fill="#3d3b33" filter="url(#b6)" opacity=".8"/>
<rect x="60" y="-5" width="120" height="30" fill="#7d7b70" filter="url(#b6)" opacity=".6"/>
<!-- shirt -->
<path d="M40 142 C50 108 72 97 100 97 L140 100 C160 104 170 118 172 142 Z" fill="#d6d6d2" filter="url(#b2)"/>
<!-- hair -->
<ellipse cx="113" cy="56" rx="33" ry="38" fill="#3f2d28" filter="url(#b2)"/>
<path d="M80 56 C70 90 72 102 82 106 L150 114 C160 100 160 80 146 50 Z" fill="#46312b" filter="url(#b2)"/>
<path d="M140 60 C152 84 154 100 148 112 L136 108Z" fill="#5e4338" filter="url(#b2)"/>
<!-- face -->
<ellipse cx="109" cy="63" rx="25" ry="33" fill="#ad8272" filter="url(#b2)"/>
<ellipse cx="109" cy="46" rx="18" ry="10" fill="#bd9483" filter="url(#b3)" opacity=".8"/>
<rect x="97" y="90" width="26" height="12" fill="#a17666" filter="url(#b2)"/>
<g filter="url(#b05)"><path d="M98 79q11 9 23 0z" fill="#e6d6cf"/><path d="M92 56h11M114 56h11" stroke="#4a3028" stroke-width="2" opacity=".75"/></g>
</svg>
</div>

<!-- tile 3 : Daria -->
<div class="tile" style="left:549px;background:#c7b8a0">
<svg width="240" height="135" viewBox="0 0 240 135">
<defs><radialGradient id="g3" gradientUnits="userSpaceOnUse" cx="140" cy="6" r="150">
<stop offset="0" stop-color="#ffffff"/><stop offset=".3" stop-color="#fffdf4"/><stop offset=".42" stop-color="#f1e8d6"/><stop offset=".62" stop-color="#e0d6c2"/><stop offset="1" stop-color="#cfc3ab"/></radialGradient></defs>
<rect width="240" height="135" fill="url(#g3)"/>
<rect x="-8" y="36" width="44" height="110" fill="#a8935e" filter="url(#b6)" opacity=".8"/>
<rect x="125" y="58" width="125" height="90" fill="#b7ab95" filter="url(#b6)" opacity=".9"/>
<ellipse cx="241" cy="86" rx="8" ry="13" fill="#24170f" filter="url(#b2)"/>
<ellipse cx="142" cy="4" rx="56" ry="27" fill="#ffffff" filter="url(#b6)"/>
<rect x="-6" y="120" width="70" height="24" fill="#5b4a42" filter="url(#b3)"/>
<ellipse cx="244" cy="140" rx="30" ry="14" fill="#8f7c64" filter="url(#b6)" opacity=".7"/>
<!-- clothing -->
<path d="M-4 142 C8 112 40 103 70 103 L130 105 C160 108 178 122 186 142 Z" fill="#5b504a" filter="url(#b2)"/>
<!-- hair -->
<ellipse cx="76" cy="52" rx="41" ry="40" fill="#3a2920" filter="url(#b2)"/>
<path d="M100 30 C122 50 120 88 116 102 L96 100 Z" fill="#2e211b" filter="url(#b2)"/>
<ellipse cx="110" cy="90" rx="8" ry="14" fill="#241a16" filter="url(#b2)"/>
<!-- face -->
<ellipse cx="68" cy="68" rx="28" ry="37" fill="#d8a78f" filter="url(#b2)"/>
<ellipse cx="64" cy="52" rx="18" ry="10" fill="#e8c0a9" filter="url(#b3)" opacity=".7"/>
<path d="M32 32 C40 12 70 8 98 26 C80 24 58 32 46 56 C40 70 32 62 32 32Z" fill="#3a2920" filter="url(#b2)"/>
<g filter="url(#b05)"><path d="M47 58q6-3 12 0M74 55q7-3 14 0" stroke="#35221c" stroke-width="2.400" fill="none"/><path d="M55 90q10 3 20-1" stroke="#a8605a" stroke-width="2.400" fill="none"/><path d="M58 74q4 3 9 0" stroke="#b58772" stroke-width="1.600" fill="none"/></g>
</svg>
</div>

<!-- tile 4 : Gordan (active speaker) -->
<div class="a" style="left:788px;top:6px;width:242px;height:137px;background:#222222;border:3px solid #02f891"></div>
<div class="a" style="left:858px;top:9px;width:101px;height:131px;overflow:hidden;background:#d9d9d2">
<svg width="101" height="131" viewBox="0 0 101 131" style="left:0;top:0">
<rect width="101" height="131" fill="#d8d9d1"/>
<ellipse cx="60" cy="85" rx="28" ry="26" fill="#c9ccd2" filter="url(#b6)"/>
<g fill="#c9a096" filter="url(#b1)" opacity=".9"><ellipse cx="40" cy="16" rx="6" ry="5"/><ellipse cx="54" cy="56" rx="5" ry="6"/><ellipse cx="88" cy="98" rx="8" ry="6"/><ellipse cx="48" cy="82" rx="4" ry="3"/></g>
<path d="M28 2 C44 24 46 50 56 66 C60 80 50 84 46 88" stroke="#a9a392" stroke-width="1.3" fill="none" filter="url(#b1)"/>
<ellipse cx="97" cy="34" rx="21" ry="30" fill="#2b2b2b" filter="url(#b1)"/>
<ellipse cx="100" cy="34" rx="13" ry="21" fill="#777775" filter="url(#b2)"/>
<path d="M-4 60 C14 52 34 60 40 80 C44 100 50 118 62 135 L-4 135Z" fill="#e6b6b0" filter="url(#b2)"/>
<path d="M-4 90 C10 88 20 100 30 135 L-4 135Z" fill="#f0cfcb" filter="url(#b3)"/>
<ellipse cx="28" cy="66" rx="7" ry="11" fill="#eeb3a8" filter="url(#b1)"/>
<path d="M-4 22 C10 30 24 40 26 50 C20 62 10 58 -4 50Z" fill="#231915" filter="url(#b2)"/>
</svg>
</div>

<!-- tile 5 : Anya (no video) -->

<!-- tile 6 : Sofia avatar -->
<div class="a" style="left:1336px;top:20.500px;width:107px;height:107px;border-radius:11px;overflow:hidden;background:#f8f7f2">
<svg width="107" height="107" viewBox="0 0 107 107" style="left:0;top:0">
<rect width="107" height="107" fill="#f8f7f2"/>
<path d="M6 7 C14 8 22 12 27 18 L13 30 C8 24 6 14 6 7Z" fill="#564650"/><path d="M98 4 C90 5 84 8 80 12 L91 24 C96 18 98 10 98 4Z" fill="#564650"/>
<path d="M8 82 C2 40 22 3 57 3 C88 3 104 34 100 70 C98 88 92 98 88 107 L20 107 C12 98 10 92 8 82Z" fill="#f2d24e"/>
<path d="M13 64 C12 74 16 84 22 88 L26 70Z" fill="#5a4048"/><path d="M96 60 C97 70 94 78 88 84 L86 66Z" fill="#5a4048"/>
<path d="M20 76 C14 50 30 30 54 30 C78 30 94 48 88 76 C86 92 80 100 78 107 L28 107 C22 98 22 90 20 76Z" fill="#ebc3bb"/>
<ellipse cx="54" cy="60" rx="20" ry="18" fill="#fbe9e1"/>
<path d="M30 60 C32 40 48 33 58 35 C74 37 82 50 80 64 C72 50 64 44 56 45 C44 46 36 52 30 60Z" fill="#e8b9b2"/>
<path d="M54 36 C50 46 50 52 56 60 C56 50 58 44 62 38Z" fill="#f0cbc4"/>
<ellipse cx="42.500" cy="53" rx="3.600" ry="4.600" fill="#dc5a44"/><ellipse cx="65" cy="52.500" rx="3.600" ry="4.600" fill="#dc5a44"/>
<ellipse cx="38" cy="61" rx="4" ry="2.200" fill="#f3b6ae" opacity=".8"/><ellipse cx="69" cy="60" rx="4" ry="2.200" fill="#f3b6ae" opacity=".8"/>
<ellipse cx="32" cy="20.500" rx="2.600" ry="3.600" fill="#3a2a2a" transform="rotate(-30 32 20.500)"/><ellipse cx="72" cy="19" rx="2.600" ry="3.600" fill="#3a2a2a" transform="rotate(30 72 19)"/>
<ellipse cx="22.500" cy="31.500" rx="5.200" ry="3.400" fill="#ea8b7b" transform="rotate(-28 22.500 31.500)"/><ellipse cx="81.500" cy="29.500" rx="5.200" ry="3.400" fill="#ea8b7b" transform="rotate(28 81.500 29.500)"/>
<path d="M2 31c1-4 5-3.500 5.500-.5c.5-3 5-3 4.500 1c-.5 3-4 5.500-5.500 6.500c-2-1-5-4-4.500-7z" fill="#f0806e"/><path d="M96 24c1-4 5-3.500 5.500-.5c.5-3 5-3 4.500 1c-.5 3-4 5.500-5.500 6.500c-2-1-5-4-4.500-7z" fill="#f0806e"/>
<path d="M18 107 C20 90 36 80 52 82 C72 80 88 90 92 107Z" fill="#eecb48"/>
<path d="M40 84 C46 90 52 92 58 88 C62 92 66 92 70 86 L66 100 L44 100Z" fill="#e2b93c"/>
<path d="M0 90 C8 84 14 88 16 107 L0 107Z" fill="#3d3034"/>
<path d="M62 84 C74 78 82 92 78 107 L64 107Z" fill="#e8b9b2"/>
<path d="M40 62 C46 74 42 84 36 90 L30 80Z" fill="#e8b9b2"/>
</svg>
</div>

<!-- name labels -->
<div class="nm" style="left:73px;width:158px"></div>
<div class="nm" style="left:313px;width:130px"></div>
<div class="nm" style="left:553px;width:193px"></div>
<div class="nm" style="left:793px;width:197px;background:rgba(46,46,48,.8)"></div>
<div class="nm" style="left:1033px;width:153px;background:#2a2b2c"></div>
<div class="nm" style="left:1273px;width:159px;background:rgba(46,46,48,.78)"></div>
<!-- mic muted icons -->
<svg style="left:556.500px;top:113px" width="22" height="22" viewBox="0 0 22 22"><rect x="6.400" y="1.900" width="8.300" height="15.100" rx="4.100" fill="#fa5a5c"/><rect x="9.500" y="16.800" width="2.100" height="2.400" fill="#fa5a5c"/><rect x="6.400" y="18.700" width="8.300" height="1.600" fill="#fa5a5c"/><path d="M.8 20.400L20.500 1.200" stroke="#3a3232" stroke-width="3.400"/><path d="M.6 20.600L20.700 1" stroke="#fa5a5c" stroke-width="1.500" stroke-linecap="round"/></svg>
<svg style="left:1276.500px;top:113px" width="22" height="22" viewBox="0 0 22 22"><rect x="6.400" y="1.900" width="8.300" height="15.100" rx="4.100" fill="#fa5a5c"/><rect x="9.500" y="16.800" width="2.100" height="2.400" fill="#fa5a5c"/><rect x="6.400" y="18.700" width="8.300" height="1.600" fill="#fa5a5c"/><path d="M.8 20.400L20.500 1.200" stroke="#3a3232" stroke-width="3.400"/><path d="M.6 20.600L20.700 1" stroke="#fa5a5c" stroke-width="1.500" stroke-linecap="round"/></svg>

<!-- right dark strip + next button -->
<div class="a" style="left:1521px;top:7px;width:65px;height:135px;background:#191513"></div>
<div class="a" style="left:1529.500px;top:50.500px;width:48px;height:48px;border-radius:50%;background:#fff"></div>
<div class="a" style="left:1534.500px;top:55.500px;width:38px;height:38px;border-radius:50%;background:#0e71eb"></div>
<svg style="left:1534.500px;top:55.500px" width="38" height="38" viewBox="0 0 38 38"><path d="M15.500 10.500L24 19l-8.500 8.500" stroke="#fff" stroke-width="2.600" fill="none" stroke-linecap="round" stroke-linejoin="round"/></svg>
<!-- ===== lower area ===== -->
<div id="pptbg"></div>
<div class="a" style="left:30px;top:357px;width:216px;height:498px;background:#e6e8ee"></div>
<div class="a" style="left:246px;top:358px;width:20px;height:497px;border-radius:8px 8px 0 0;background:#f3f3f6"></div>
<div class="a" style="left:266px;top:357px;width:3.500px;height:498px;background:#ecedf1"></div>
<div class="a" style="left:269.500px;top:357px;width:1258px;height:498px;background:linear-gradient(90deg,#e5e7ec 0%,#e8e8ec 45%,#ece8ea 80%,#ebe7e9 100%)"></div>
<div class="a" style="left:1527.500px;top:357px;width:20.500px;height:455px;border-radius:0 0 9px 9px;background:#f6f5f7"></div>
<div class="a" style="left:1527.500px;top:812px;width:20.500px;height:43px;background:#ebe8ea"></div>

<!-- thumbnails -->
<div class="thumb" style="top:350px;height:56.500px;border-radius:0 0 4px 4px">
<div class="a" style="left:14px;top:8px;width:56px;height:7px;opacity:0.55;background:repeating-linear-gradient(180deg,#6a6a6a 0 1px,transparent 1px 2.4px)"></div>
<div class="a" style="left:14px;top:17px;width:56px;height:9px;opacity:0.55;background:repeating-linear-gradient(180deg,#6a6a6a 0 1px,transparent 1px 2.4px)"></div>
<div class="a" style="left:14px;top:28px;width:56px;height:12px;opacity:0.55;background:repeating-linear-gradient(180deg,#6a6a6a 0 1px,transparent 1px 2.4px)"></div>
<div class="a" style="left:78px;top:8px;width:58px;height:7px;opacity:0.55;background:repeating-linear-gradient(180deg,#6a6a6a 0 1px,transparent 1px 2.4px)"></div>
<div class="a" style="left:78px;top:17px;width:58px;height:11px;opacity:0.55;background:repeating-linear-gradient(180deg,#6a6a6a 0 1px,transparent 1px 2.4px)"></div>
<div class="a" style="left:78px;top:30px;width:58px;height:9px;opacity:0.55;background:repeating-linear-gradient(180deg,#6a6a6a 0 1px,transparent 1px 2.4px)"></div>
<div class="a" style="left:78px;top:41px;width:58px;height:5px;opacity:0.45;background:repeating-linear-gradient(180deg,#6a6a6a 0 1px,transparent 1px 2.4px)"></div>
</div>
<div class="thumb" style="top:431.500px;height:84px">
<div class="a" style="left:30px;top:23.5px;width:40px;height:1.2px;opacity:0.8;background:repeating-linear-gradient(180deg,#333 0 1px,transparent 1px 2.4px)"></div>
<div class="a" style="left:96px;top:23px;width:34px;height:1.2px;opacity:0.6;background:repeating-linear-gradient(180deg,#555 0 1px,transparent 1px 2.4px)"></div>
<div class="a" style="left:14px;top:27px;width:56px;height:7.5px;opacity:0.55;background:repeating-linear-gradient(180deg,#6a6a6a 0 1px,transparent 1px 2.4px)"></div>
<div class="a" style="left:14px;top:37px;width:56px;height:10px;opacity:0.55;background:repeating-linear-gradient(180deg,#6a6a6a 0 1px,transparent 1px 2.4px)"></div>
<div class="a" style="left:14px;top:53px;width:56px;height:19px;opacity:0.55;background:repeating-linear-gradient(180deg,#6a6a6a 0 1px,transparent 1px 2.4px)"></div>
<div class="a" style="left:78px;top:26px;width:58px;height:8.5px;opacity:0.55;background:repeating-linear-gradient(180deg,#6a6a6a 0 1px,transparent 1px 2.4px)"></div>
<div class="a" style="left:78px;top:36.5px;width:58px;height:9.5px;opacity:0.55;background:repeating-linear-gradient(180deg,#6a6a6a 0 1px,transparent 1px 2.4px)"></div>
<div class="a" style="left:78px;top:47.5px;width:58px;height:21px;opacity:0.55;background:repeating-linear-gradient(180deg,#6a6a6a 0 1px,transparent 1px 2.4px)"></div>
</div>
<div class="thumb" style="top:541px;height:84px">
<div class="a" style="left:11px;top:24px;width:126px;height:7.5px;opacity:0.45;background:repeating-linear-gradient(180deg,#777 0 1px,transparent 1px 2.6px)"></div>
<div class="a" style="left:13px;top:37px;width:124px;height:10px;opacity:0.6;background:repeating-linear-gradient(180deg,#5a5a5a 0 1px,transparent 1px 2.6px)"></div>
<div class="a" style="left:13px;top:50px;width:124px;height:10px;opacity:0.6;background:repeating-linear-gradient(180deg,#5a5a5a 0 1px,transparent 1px 2.6px)"></div>
<div class="a" style="left:13px;top:63px;width:124px;height:7.5px;opacity:0.6;background:repeating-linear-gradient(180deg,#5a5a5a 0 1px,transparent 1px 2.6px)"></div>
</div>
<div class="a" style="left:68.500px;top:646.500px;width:156.500px;height:91px;border-radius:7px;background:#fff;border:3px solid #7b1120"></div>
<div class="a" id="bars7" style="left:124.500px;top:679px;width:45.500px;height:51px;background:repeating-linear-gradient(180deg,#4472c4 0 4.200px,#fff 4.200px 5.200px)"></div>
<div class="thumb" style="top:759.500px;height:84px">
 <div class="a" style="left:50.300px;top:23.300px;width:45.700px;height:50.500px;background:repeating-linear-gradient(180deg,#4472c4 0 7px,#fff 7px 8.700px)"></div>
</div>

<!-- left scrollbar -->
<svg style="left:250px;top:362px" width="13" height="10" viewBox="0 0 13 10"><path d="M6.200 1.800L11 8H1.400z" fill="#6b6b6e" stroke="#6b6b6e" stroke-width="1.600" stroke-linejoin="round"/></svg>
<div class="a" style="left:251px;top:555px;width:10px;height:257px;border-radius:5px;background:#3a3a3a"></div>

<!-- slide -->
<div class="a" style="left:456.500px;top:367px;width:885.500px;height:488px;background:#fff;box-shadow:0 0 2px rgba(0,0,0,.25)"></div>
<div id="bars">
<div class="bar" style="top:533.80px"></div>
<div class="bar" style="top:565.42px"></div>
<div class="bar" style="top:597.04px"></div>
<div class="bar" style="top:628.66px"></div>
<div class="bar" style="top:660.28px"></div>
<div class="bar" style="top:691.90px"></div>
<div class="bar" style="top:723.52px"></div>
<div class="bar" style="top:755.14px"></div>
<div class="bar" style="top:786.76px"></div>
<div class="bar" style="top:818.38px"></div>
</div>

<!-- right scrollbar -->
<svg style="left:1531px;top:362px" width="14" height="11" viewBox="0 0 14 11"><path d="M6.800 2L11.800 8.500H1.800z" fill="#6e6b6e" stroke="#6e6b6e" stroke-width="1.600" stroke-linejoin="round"/></svg>
<div class="a" style="left:1533.500px;top:627px;width:9.500px;height:41px;border-radius:5px;background:#6b6a6c"></div>
<svg style="left:1531px;top:798px" width="14" height="56" viewBox="0 0 14 56"><g fill="#6e6b6e" stroke="#6e6b6e" stroke-width="1.400" stroke-linejoin="round"><path d="M2 3h9.600L6.800 9.500z"/><path d="M6.800 19.500L11 25H2.600zM6.800 25.500L12 32.500H1.600z"/><path d="M1.600 40.500H12L6.800 47.500zM2.600 47.500H11L6.800 53z"/></g></svg>

<!-- mouse cursor -->
<svg style="left:257px;top:690px" width="16" height="24" viewBox="0 0 16 24"><path d="M1.500 1.500v17l4.300-3.800 3 7 2.600-1.100-3-6.900h5.600z" fill="#fff" stroke="#111" stroke-width="1.200" stroke-linejoin="round"/></svg>

<div id="bottombar"></div>
<!-- ================= POWERPOINT WINDOW ================= -->

<!-- title bar -->
<svg style="left:48.500px;top:164.500px" width="21" height="21" viewBox="0 0 21 21">
<defs><linearGradient id="pl" x1="0" y1="1" x2="1" y2="0"><stop offset="0" stop-color="#cf3322"/><stop offset=".5" stop-color="#ee4f28"/><stop offset="1" stop-color="#ff8a2c"/></linearGradient></defs>
<circle cx="10.400" cy="10" r="9.800" fill="url(#pl)"/>
<path d="M10.400 .2a9.800 9.800 0 0 1 9.800 9.800h-9.800z" fill="#ff9736"/>
<path d="M10.400 10h9.800a9.800 9.800 0 0 1-3.500 7.500z" fill="#f2602c"/>
<rect x=".4" y="5.200" width="10.200" height="10.200" rx="1.700" fill="#b3231e"/>
</svg>
<span class="t" style="left:52.300px;top:170.300px;font-size:9.500px;font-weight:bold;color:#fff">P</span>

<div class="a" style="left:190px;top:162.500px;width:51px;height:23px;border-radius:12px;border:1px solid #6a6a6a;background:#fff"></div>
<div class="a" style="left:194px;top:166px;width:16px;height:16px;border-radius:50%;background:#5e5d61"></div>

<!-- save -->
<svg style="left:254px;top:164px" width="20" height="20" viewBox="0 0 20 20"><path d="M1.300 1.800H19V19.300H3.700L1.300 16.900z" fill="#dc94e0" stroke="#a333a6" stroke-width="1.300" stroke-linejoin="miter"/><rect x="4.500" y="1.800" width="10.800" height="6.500" fill="#faf8fa" stroke="#a333a6" stroke-width="1.200"/><rect x="5.700" y="13.300" width="8.900" height="6" fill="#fff" stroke="#a333a6" stroke-width="1.200"/></svg>
<!-- undo -->
<svg style="left:289px;top:163px" width="33" height="22" viewBox="0 0 33 22"><path d="M.9 2.200V9.600H8.600" class="ic" style="stroke-width:1.300;stroke-linecap:butt;stroke-linejoin:miter"/><path d="M1.500 9.200L6.600 4.400C9 2.200 13 1.500 15.400 4.200C18 7.200 17 10.600 14 13.600L7.100 20.300" class="ic" style="stroke-width:1.300"/><path d="M25.300 9.400l3 3 3-3" class="chev"/></svg>
<!-- redo (disabled) -->
<svg style="left:332px;top:163px" width="22" height="23" viewBox="0 0 22 23"><path d="M1.700 2.600H8.200V8.500" class="icg" style="stroke-width:1.300;stroke-linecap:butt;stroke-linejoin:miter"/><path d="M8 3.500A8.900 8.900 0 1 0 16.500 4.300" class="icg" style="stroke-width:1.300"/></svg>
<!-- present from start -->
<svg style="left:367px;top:164px" width="20" height="20" viewBox="0 0 20 20"><path d="M1.900 1.600V9.500a1.700 1.700 0 0 0 1.700 1.700H15a1.700 1.700 0 0 0 1.700-1.700V1.600z" fill="#fafaf6" class="ic" style="stroke-width:1.300"/><path d="M.8 1.600H18.400" class="ic" style="stroke-width:1.600;stroke-linecap:butt"/><path d="M9.500 11.200V18.300M4.300 18.300H14.700" class="ic" style="stroke-width:1.300"/><path d="M8 4L11.900 6.400L8 8.800z" fill="#2e9e4f"/></svg>
<!-- customize QAT -->
<svg style="left:405px;top:170px" width="12" height="10" viewBox="0 0 12 10"><path d="M1.900 2.100H10.700" class="ic" style="stroke-width:1.500;stroke-linecap:butt"/><path d="M2.400 4.700L6.300 8.200L10.200 4.700" class="ic" style="stroke-width:1.400"/></svg>
<!-- saved chevron -->
<svg style="left:759px;top:170px" width="13" height="9" viewBox="0 0 13 9"><path d="M1.500 1.800l5 5 5-5" class="chev" style="stroke-width:1.400"/></svg>

<!-- search box -->
<div class="a" style="left:808px;top:157px;width:408px;height:36px;border-radius:4px;background:#fbfbfb;box-shadow:0 1px 3px rgba(0,0,0,.28),0 0 1px rgba(0,0,0,.2)"></div>
<svg style="left:823px;top:165px" width="18" height="19" viewBox="0 0 18 19"><circle cx="11" cy="6.800" r="5.400" class="ic" style="stroke:#555;stroke-width:1.300"/><path d="M7 10.800L1 17.200" class="ic" style="stroke:#555;stroke-width:1.300"/></svg>

<!-- account -->
<div class="a" style="left:1334px;top:160px;width:29px;height:29px;border-radius:50%;background:#0e6b5b"></div>
<!-- window buttons -->
<svg style="left:1399px;top:167px" width="130" height="15" viewBox="0 0 130 15"><path d="M.8 7h11.500" class="ic" style="stroke-width:1.200"/><rect x="57.500" y="3.800" width="9.500" height="9.500" rx="2" class="ic" style="stroke-width:1.200"/><path d="M60 1.500h7a3 3 0 0 1 3 3v7" class="ic" style="stroke-width:1.200"/><path d="M114.800 1.500l12 12M126.800 1.500l-12 12" class="ic" style="stroke-width:1.200"/></svg>

<!-- comments + share -->
<div class="a" style="left:1330.500px;top:206px;width:28.500px;height:28.500px;border-radius:5px;border:1px solid #8a8a8a;background:#fff"></div>
<svg style="left:1338px;top:213px" width="15" height="15" viewBox="0 0 15 15"><path d="M1 1h12.500v8.600H6L3.200 12.500V9.600H1z" class="ic" style="stroke-width:1.200"/></svg>
<div class="a" style="left:1367.800px;top:206px;width:166.200px;height:28.500px;border-radius:5px;background:#c43e1c"></div>
<svg style="left:1374px;top:212px" width="16" height="16" viewBox="0 0 16 16"><path d="M5 4.500H2.800a1.300 1.300 0 0 0-1.300 1.300v7a1.300 1.300 0 0 0 1.300 1.300h8.500a1.300 1.300 0 0 0 1.300-1.300v-2" stroke="#fff" stroke-width="1.300" fill="none" stroke-linecap="round"/><path d="M9.500 1.500l4.500 4-4.500 4v-2.400c-2.600 0-4.300.8-5.500 2.700.3-3.400 2.200-5.600 5.500-5.900z" stroke="#fff" stroke-width="1.200" fill="none" stroke-linejoin="round"/></svg>
<svg style="left:1520px;top:216px" width="10" height="8" viewBox="0 0 10 8"><path d="M2 2.500l3 3 3-3" stroke="#fff" stroke-width="1.400" fill="none" stroke-linecap="round" stroke-linejoin="round"/></svg>

<!-- active tab underline -->
<div class="a" style="left:109.500px;top:231px;width:66.500px;height:2.500px;border-radius:1.500px;background:#c43e1c"></div>

<!-- ribbon body -->
<div class="a" style="left:39px;top:238.500px;width:1499.500px;height:118.500px;border-radius:9px;background:#fbfbfb;box-shadow:0 1.500px 4px rgba(0,0,0,.22),0 0 1px rgba(0,0,0,.12)"></div>
<div class="sep" style="left:183.500px;top:244px;height:106px"></div>
<div class="sep" style="left:319.500px;top:244px;height:106px"></div>
<div class="sep" style="left:689.500px;top:244px;height:106px"></div>
<div class="sep" style="left:964px;top:244px;height:106px"></div>
<div class="sep" style="left:1255px;top:244px;height:106px"></div>
<div class="sep" style="left:1399px;top:244px;height:106px"></div>
<div class="sep" style="left:1497px;top:244px;height:106px"></div>
<div class="sep" style="left:649.500px;top:253px;height:27px"></div>
<div class="sep" style="left:583.500px;top:291px;height:28px"></div>
<div class="sep" style="left:823.500px;top:291px;height:28px"></div>
<!-- ===== ribbon icons: clipboard ===== -->
<svg style="left:70px;top:248px" width="36" height="38" viewBox="0 0 36 38">
<rect x="1.500" y="6.500" width="23" height="27.500" rx="1.500" fill="#fef3e4" stroke="#e8912d" stroke-width="1.500"/>
<path d="M7.500 8.500V5.500h3.200a3 3 0 0 1 5.600 0h3.200v3z" fill="#fbfbfb" stroke="#8a8a8a" stroke-width="1.100" stroke-linejoin="round"/>
<rect x="17.500" y="15" width="15.500" height="21" rx="1" fill="#fbfbfb" stroke="#444" stroke-width="1.200"/>
</svg>
<svg style="left:78px;top:311px" width="12" height="9" viewBox="0 0 12 9"><path d="M3 2.800l3 3 3-3" class="chev"/></svg>
<!-- cut -->
<svg style="left:125px;top:247px" width="16" height="21" viewBox="0 0 16 21"><path d="M3.500 1.500l7.300 13.200M12.500 1.500L5.200 14.700" class="ic" style="stroke-width:1.200"/><circle cx="4" cy="17" r="2.300" fill="none" stroke="#2f7fd0" stroke-width="1.200"/><circle cx="12" cy="17" r="2.300" fill="none" stroke="#2f7fd0" stroke-width="1.200"/></svg>
<!-- copy -->
<svg style="left:122px;top:278px" width="22" height="21" viewBox="0 0 22 21"><path d="M6.500 15.500H1.800V1.800h8.700V4" class="ic" style="stroke-width:1.200"/><path d="M7 5h7.500l5 5v9.500H7z" class="ic" style="stroke-width:1.200;fill:#fbfbfb"/><path d="M14.500 5v5h5M10 13.500h6.500M10 16.200h6.500" class="ic" style="stroke-width:1"/></svg>
<svg style="left:154px;top:284px" width="12" height="9" viewBox="0 0 12 9"><path d="M3 2.800l3 3 3-3" class="chev"/></svg>
<!-- format painter -->
<svg style="left:123px;top:308px" width="21" height="21" viewBox="0 0 21 21"><path d="M1.500 11.500l9.500-4.800 3.800 5.300L7 19.500z" fill="#fbd9b0" stroke="#e07a1f" stroke-width="1.300" stroke-linejoin="round"/><path d="M4 13.500l6 4.500" stroke="#e07a1f" stroke-width="1.100"/><path d="M11.500 6.200l3.200-3.500c1.200-1.300 3.600.5 2.800 2l-.8 1.500 2 1.300-3.300 4.300z" class="ic" style="stroke-width:1.200;fill:#fbfbfb"/></svg>
<!-- launcher -->
<svg style="left:169px;top:340px" width="11" height="11" viewBox="0 0 11 11"><path d="M1.500 7.500V1.500h6" class="ic" style="stroke-width:1.100"/><path d="M4 4l5.500 5.500M9.500 5.500v4h-4" class="ic" style="stroke-width:1.100"/></svg>

<!-- ===== slides group ===== -->
<svg style="left:207px;top:245px" width="38" height="35" viewBox="0 0 38 35">
<rect x="4.500" y="7.500" width="31.500" height="25.500" fill="#f3f3f3" stroke="#777" stroke-width="1.100"/>
<rect x="6.800" y="9.800" width="27" height="21" fill="#fbfbfb" stroke="#8a8a8a" stroke-width="1"/>
<path d="M6.800 15.500h27M19.500 15.500v15.300" stroke="#8a8a8a" stroke-width="1" fill="none"/>
<rect x="0" y="3" width="13" height="11" fill="#fbfbfb"/>
<path d="M9 1.500v18M.8 10.500h17" stroke="#2e9e4f" stroke-width="1.500" fill="none"/>
</svg>
<svg style="left:241px;top:313px" width="12" height="9" viewBox="0 0 12 9"><path d="M3 2.800l3 3 3-3" class="chev"/></svg>
<!-- layout -->
<svg style="left:267px;top:248px" width="21" height="18" viewBox="0 0 21 18"><rect x="1" y="1" width="18.600" height="15.800" fill="#e9e9e9" stroke="#666" stroke-width="1.100"/><rect x="3.200" y="3.200" width="14.200" height="11.400" fill="#fbfbfb" stroke="#777" stroke-width="1"/><path d="M3.200 6.500h14.200M10.300 6.500v8" stroke="#777" stroke-width="1"/></svg>
<svg style="left:291px;top:254px" width="12" height="9" viewBox="0 0 12 9"><path d="M3 2.800l3 3 3-3" class="chev"/></svg>
<!-- reset -->
<svg style="left:267px;top:277px" width="21" height="20" viewBox="0 0 21 20"><path d="M9 3h10.500v15H1.500V11" fill="#efefef" stroke="#666" stroke-width="1.100"/><path d="M8 12.500v-1.500M4 15.800h13.200V5.500h-6" fill="none" stroke="#888" stroke-width="1"/><path d="M4.800 1.200L1.500 4.500l3.300 3.300M1.800 4.500h4.700c2.400 0 3.500 1.600 3.500 4" fill="none" stroke="#2f7fd0" stroke-width="1.400" stroke-linecap="round" stroke-linejoin="round"/></svg>
<!-- section -->
<svg style="left:267px;top:308px" width="21" height="22" viewBox="0 0 21 22"><path d="M1 2.300h18.600" stroke="#2e9e4f" stroke-width="1.800"/><rect x="1" y="6" width="18.600" height="14.500" fill="#e9e9e9" stroke="#666" stroke-width="1.100"/><rect x="3.400" y="9" width="13.800" height="9" fill="#fbfbfb" stroke="#777" stroke-width="1"/></svg>
<svg style="left:291px;top:315px" width="12" height="9" viewBox="0 0 12 9"><path d="M3 2.800l3 3 3-3" class="chev"/></svg>

<!-- ===== font group ===== -->
<div class="a" style="left:330px;top:253px;width:198px;height:27.500px;border-radius:4px;background:#efefef"></div>
<div class="a" style="left:530.500px;top:253px;width:54.500px;height:27.500px;border-radius:4px;background:#efefef"></div>
<svg style="left:516px;top:263px" width="10" height="8" viewBox="0 0 10 8"><path d="M2 2.500l3 3 3-3" class="chevg"/></svg>
<svg style="left:573px;top:263px" width="10" height="8" viewBox="0 0 10 8"><path d="M2 2.500l3 3 3-3" class="chevg"/></svg>
<!-- grow / shrink carets -->
<svg style="left:605px;top:257px" width="8" height="6" viewBox="0 0 8 6"><path d="M1.500 4.500L4 2l2.500 2.500" class="chevg"/></svg>
<svg style="left:636px;top:258px" width="8" height="6" viewBox="0 0 8 6"><path d="M1.500 1.500L4 4l2.500-2.500" class="chevg"/></svg>
<!-- clear formatting eraser -->
<svg style="left:664px;top:264px" width="13" height="11" viewBox="0 0 13 11"><path d="M1.500 6.500l5-5 4.500 3-5 5.500H3z" fill="#fbfbfb" stroke="#a6a6a6" stroke-width="1.100" stroke-linejoin="round"/></svg>
<!-- underline for П, strike for ab, arrows for AV -->
<div class="a" style="left:399px;top:313.500px;width:11.500px;height:1.200px;background:#a0a0a0"></div>
<div class="a" style="left:457px;top:306.500px;width:21px;height:1.100px;background:#a0a0a0"></div>
<svg style="left:488px;top:309px" width="21" height="8" viewBox="0 0 21 8"><path d="M1.500 4h18M4 1.500L1.500 4 4 6.500M17 1.500L19.500 4 17 6.500" class="chevg" style="stroke-width:1"/></svg>
<svg style="left:513px;top:301px" width="10" height="8" viewBox="0 0 10 8"><path d="M2 2.500l3 3 3-3" class="chevg"/></svg>
<svg style="left:563px;top:301px" width="10" height="8" viewBox="0 0 10 8"><path d="M2 2.500l3 3 3-3" class="chevg"/></svg>
<!-- highlighter -->
<svg style="left:590px;top:294px" width="22" height="22" viewBox="0 0 22 22"><path d="M5.500 11.500l8-8.500c1.200-1.200 3.600.8 2.600 2.300L9.500 14.500l-3.500 1z" fill="#fbfbfb" stroke="#a6a6a6" stroke-width="1.200" stroke-linejoin="round"/><path d="M7 10l3.500 3" stroke="#a6a6a6" stroke-width="1"/><rect x="1" y="17.500" width="19.500" height="3.800" fill="#bdbdbd"/></svg>
<svg style="left:618px;top:301px" width="10" height="8" viewBox="0 0 10 8"><path d="M2 2.500l3 3 3-3" class="chevg"/></svg>
<!-- font color bar -->
<div class="a" style="left:639.500px;top:311.500px;width:19.500px;height:3.800px;background:#bdbdbd"></div>
<svg style="left:666px;top:301px" width="10" height="8" viewBox="0 0 10 8"><path d="M2 2.500l3 3 3-3" class="chevg"/></svg>
<svg style="left:675px;top:341px" width="10" height="10" viewBox="0 0 10 10"><path d="M1.500 6.500V1.500h5" class="icg" style="stroke-width:1"/><path d="M3.500 3.500l5 5M8.500 5v3.500H5" class="icg" style="stroke-width:1"/></svg>
<!-- ===== paragraph group ===== -->
<div class="a" style="left:700px;top:253px;width:45.500px;height:27.800px;border-radius:4px;background:#ebebeb;border:1px solid #7a7a7a"></div>
<svg style="left:703px;top:257px" width="22" height="20" viewBox="0 0 22 20"><g fill="#9a9a9a"><rect x="1" y="1.500" width="3" height="3"/><rect x="1" y="8.500" width="3" height="3"/><rect x="1" y="15.500" width="3" height="3"/></g><path d="M7 3h12.500M7 10h12.500M7 17h12.500" stroke="#9a9a9a" stroke-width="1.200"/></svg>
<svg style="left:730px;top:262px" width="12" height="9" viewBox="0 0 12 9"><path d="M3 2.800l3 3 3-3" class="chev" style="stroke:#222;stroke-width:1.500"/></svg>
<!-- numbered -->
<svg style="left:751px;top:256px" width="22" height="22" viewBox="0 0 22 22"><path d="M7.500 4h12.500M7.500 11h12.500M7.500 18h12.500" stroke="#a6a6a6" stroke-width="1.200"/><g fill="#a6a6a6" font-family="Liberation Sans, sans-serif" font-size="5.500"><text x=".8" y="6">1</text><text x=".8" y="13">2</text><text x=".8" y="20">3</text></g></svg>
<svg style="left:779px;top:263px" width="10" height="8" viewBox="0 0 10 8"><path d="M2 2.500l3 3 3-3" class="chevg"/></svg>
<!-- decrease indent -->
<svg style="left:801px;top:257px" width="19" height="19" viewBox="0 0 19 19"><path d="M1 2h17M8 7h10M8 12h10M1 17h17" stroke="#a6a6a6" stroke-width="1.200"/><path d="M6.500 9.500H1.500M3.500 7.500l-2 2 2 2" class="chevg" style="stroke-width:1"/></svg>
<!-- increase indent -->
<svg style="left:832px;top:257px" width="19" height="19" viewBox="0 0 19 19"><path d="M1 2h17M8 7h10M8 12h10M1 17h17" stroke="#a6a6a6" stroke-width="1.200"/><path d="M1 9.500h5M4 7.500l2 2-2 2" class="chevg" style="stroke-width:1"/></svg>
<!-- line spacing -->
<svg style="left:861px;top:257px" width="22" height="20" viewBox="0 0 22 20"><path d="M8.500 2.500h12.500M8.500 7.500h12.500M8.500 12.500h12.500M8.500 17.500h12.500" stroke="#a6a6a6" stroke-width="1.200"/><path d="M4 1.500v17M1.500 4L4 1.500 6.500 4M1.500 16L4 18.500 6.500 16" class="chevg" style="stroke-width:1"/></svg>
<svg style="left:887px;top:263px" width="10" height="8" viewBox="0 0 10 8"><path d="M2 2.500l3 3 3-3" class="chevg"/></svg>
<!-- text direction -->
<svg style="left:913px;top:247px" width="18" height="21" viewBox="0 0 18 21"><path d="M3.500 1.500v17M1 16l2.500 2.500L6 16M13 10v8.500M10.500 16l2.500 2.500 2.500-2.500" class="chevg" style="stroke-width:1.100"/><path d="M9.500 8.500l3.200-7.300 3.200 7.300M10.600 6h4.200" class="chevg" style="stroke-width:1"/></svg>
<svg style="left:937px;top:254px" width="10" height="8" viewBox="0 0 10 8"><path d="M2 2.500l3 3 3-3" class="chevg"/></svg>
<!-- align text -->
<svg style="left:911px;top:278px" width="21" height="19" viewBox="0 0 21 19"><path d="M5 3.500H1.500v12H5M15.500 3.500H19v12h-3.500" class="chevg" style="stroke-width:1.300"/><path d="M10.300 1v7M8 3.300L10.300 1l2.300 2.300M10.300 18v-7M8 15.700l2.300 2.300 2.300-2.300M5 9.500h10.500" class="chevg" style="stroke-width:1"/></svg>
<svg style="left:937px;top:285px" width="10" height="8" viewBox="0 0 10 8"><path d="M2 2.500l3 3 3-3" class="chevg"/></svg>
<!-- smartart -->
<svg style="left:911px;top:311px" width="21" height="16" viewBox="0 0 21 16"><path d="M1 1.500h11l5 4.500H8.500l-3 3.500z" fill="#bdbdbd" stroke="#a0a0a0" stroke-width="1" stroke-linejoin="round"/><rect x="8.500" y="7" width="11.500" height="8" fill="#fbfbfb" stroke="#a0a0a0" stroke-width="1.100"/><path d="M11 9.700h6.500M11 12.300h6.500" stroke="#a6a6a6" stroke-width="1"/></svg>
<svg style="left:937px;top:315px" width="10" height="8" viewBox="0 0 10 8"><path d="M2 2.500l3 3 3-3" class="chevg"/></svg>
<!-- alignment row -->
<svg style="left:704px;top:295px" width="20" height="18" viewBox="0 0 20 18"><path d="M1 1.500h17.500M1 6.500h12M1 11.400h17.500M1 16.400h12" stroke="#a6a6a6" stroke-width="1.200"/></svg>
<svg style="left:735px;top:295px" width="20" height="18" viewBox="0 0 20 18"><path d="M1 1.500h17.500M3.800 6.500h12M1 11.400h17.500M3.800 16.400h12" stroke="#a6a6a6" stroke-width="1.200"/></svg>
<svg style="left:766px;top:295px" width="20" height="18" viewBox="0 0 20 18"><path d="M1 1.500h17.500M6.500 6.500h12M1 11.400h17.500M6.500 16.400h12" stroke="#a6a6a6" stroke-width="1.200"/></svg>
<svg style="left:797px;top:295px" width="20" height="18" viewBox="0 0 20 18"><path d="M1 1.500h17.500M1 6.500h17.500M1 11.400h17.500M1 16.400h17.500" stroke="#a6a6a6" stroke-width="1.200"/></svg>
<svg style="left:832px;top:298px" width="17" height="12" viewBox="0 0 17 12"><path d="M1 2.200h6M9.500 2.200h6M1 6.500h6M9.500 6.500h6M1 10.600h6M9.500 10.600h6" stroke="#b0b0b0" stroke-width="1.300"/></svg>
<svg style="left:855px;top:301px" width="10" height="8" viewBox="0 0 10 8"><path d="M2 2.500l3 3 3-3" class="chevg"/></svg>
<svg style="left:949.500px;top:341px" width="10" height="10" viewBox="0 0 10 10"><path d="M1.500 6.500V1.500h5" class="icg" style="stroke-width:1"/><path d="M3.500 3.500l5 5M8.500 5v3.500H5" class="icg" style="stroke-width:1"/></svg>

<!-- ===== drawing group ===== -->
<svg style="left:981px;top:248px" width="36" height="35" viewBox="0 0 36 35"><rect x="1.300" y="1.300" width="22" height="21.500" fill="#74aeea" stroke="#1f6fd6" stroke-width="1.300"/><circle cx="22.200" cy="21.900" r="11.300" fill="#fbfbfb" stroke="#3b3b3b" stroke-width="1.200"/></svg>
<svg style="left:992px;top:310px" width="12" height="9" viewBox="0 0 12 9"><path d="M3 2.800l3 3 3-3" class="chev"/></svg>
<svg style="left:1056px;top:248px" width="36" height="36" viewBox="0 0 36 36"><rect x="6" y="5.500" width="23" height="22.500" fill="#fbd99a" stroke="#e8912d" stroke-width="1.300"/><rect x="1" y="1" width="14" height="13.500" fill="#fbfbfb" stroke="#3b3b3b" stroke-width="1.200"/><rect x="20.500" y="20" width="14" height="14" fill="#fbfbfb" stroke="#3b3b3b" stroke-width="1.200"/></svg>
<svg style="left:1067px;top:310px" width="12" height="9" viewBox="0 0 12 9"><path d="M3 2.800l3 3 3-3" class="chev"/></svg>
<!-- quick styles (disabled) -->
<svg style="left:1138px;top:248px" width="38" height="36" viewBox="0 0 38 36"><rect x="1.500" y="1.500" width="32.500" height="32" rx="2" fill="#f1f1f1" stroke="#b9b9b9" stroke-width="1.200"/><path d="M36 13.500C30 20 24 27 20 31l-2.500-2.300C22 24.500 29 18 36 13.500z" fill="#c8c8c8" stroke="#b0b0b0" stroke-width="1"/><path d="M18 28.500c-3 .2-4.500 2.500-7 5.500 4 .5 8-.5 9.500-3.200z" fill="#bdbdbd"/></svg>
<svg style="left:1167px;top:313px" width="10" height="8" viewBox="0 0 10 8"><path d="M2 2.500l3 3 3-3" class="chevg"/></svg>
<!-- fill -->
<svg style="left:1194px;top:247px" width="21" height="21" viewBox="0 0 21 21"><path d="M6 8l5.500-6 5 4.500-6 6.500z" fill="#fbfbfb" stroke="#a6a6a6" stroke-width="1.100" stroke-linejoin="round"/><path d="M9.500 1c2-1 3.500.5 3 2.500M16.500 6.500c1.500 1.500 2 3 1.500 5" class="icg" style="stroke-width:1"/><rect x=".6" y="15.500" width="19" height="4" fill="#bdbdbd"/></svg>
<svg style="left:1227px;top:254px" width="10" height="8" viewBox="0 0 10 8"><path d="M2 2.500l3 3 3-3" class="chevg"/></svg>
<!-- outline -->
<svg style="left:1194px;top:278px" width="21" height="21" viewBox="0 0 21 21"><path d="M8 3.500H2v9.500h12V9" class="icg" style="stroke-width:1.100"/><path d="M7.500 11l1-3.500 7.200-6.200c1.200-1 3 .8 2 2L10.800 10z" fill="#fbfbfb" stroke="#a6a6a6" stroke-width="1.100" stroke-linejoin="round"/><rect x=".6" y="15.500" width="19" height="4" fill="#bdbdbd"/></svg>
<svg style="left:1227px;top:285px" width="10" height="8" viewBox="0 0 10 8"><path d="M2 2.500l3 3 3-3" class="chevg"/></svg>
<!-- effects -->
<svg style="left:1194px;top:311px" width="21" height="17" viewBox="0 0 21 17"><path d="M1 9.500L5.500 2h11l3 2.500-4.500 8H4z" fill="#d9d9d9" stroke="#9a9a9a" stroke-width="1.100" stroke-linejoin="round"/><path d="M1 9.500l3 5.500h11l4.500-8M4 12.500l0 2.500" fill="none" stroke="#9a9a9a" stroke-width="1.100" stroke-linejoin="round"/></svg>
<svg style="left:1219px;top:315px" width="10" height="8" viewBox="0 0 10 8"><path d="M2 2.500l3 3 3-3" class="chevg"/></svg>
<svg style="left:1240.500px;top:341px" width="10" height="10" viewBox="0 0 10 10"><path d="M1.500 6.500V1.500h5" class="icg" style="stroke-width:1"/><path d="M3.500 3.500l5 5M8.500 5v3.500H5" class="icg" style="stroke-width:1"/></svg>

<!-- ===== editing group ===== -->
<svg style="left:1270px;top:247px" width="20" height="20" viewBox="0 0 20 20"><circle cx="11.800" cy="7.500" r="6" class="ic" style="stroke-width:1.300"/><path d="M7.500 12L1 18.500" class="ic" style="stroke-width:1.300"/></svg>
<svg style="left:1268px;top:279px" width="21" height="21" viewBox="0 0 21 21"><path d="M2 9.500c-1 3.500 1 5.500 4.500 5.500h2M6.500 12.500L9 15l-2.500 2.500" fill="none" stroke="#2f86d8" stroke-width="1.300" stroke-linecap="round" stroke-linejoin="round"/><path d="M5 6.500L2.500 9l2.500 2.500" fill="none" stroke="#2f86d8" stroke-width="1.200" stroke-linecap="round" stroke-linejoin="round" opacity=".0"/><g font-family="Liberation Sans, sans-serif"><text x="7.500" y="9" font-size="11" fill="#b14fc5">b</text><text x="12" y="19.500" font-size="11" fill="#2f86d8">c</text></g></svg>
<svg style="left:1370px;top:284px" width="12" height="9" viewBox="0 0 12 9"><path d="M3 2.800l3 3 3-3" class="chev"/></svg>
<svg style="left:1270px;top:309px" width="16" height="20" viewBox="0 0 16 20"><path d="M2 1.500v14l3.800-3.300 2.600 6 2.200-1-2.600-5.800h5z" fill="#fbfbfb" stroke="#3b3b3b" stroke-width="1.200" stroke-linejoin="round"/></svg>
<svg style="left:1351px;top:315.500px" width="12" height="9" viewBox="0 0 12 9"><path d="M3 2.800l3 3 3-3" class="chev"/></svg>

<!-- ===== add-ins ===== -->
<svg style="left:1431px;top:248px" width="35" height="35" viewBox="0 0 35 35"><rect x="1.500" y="1.500" width="32" height="31.500" fill="#fdf3ef" stroke="#d9532c" stroke-width="1.500"/><g fill="#fbfbfb" stroke="#d9532c" stroke-width="1.200"><rect x="5" y="5" width="11" height="11"/><rect x="19" y="5" width="11" height="11"/><rect x="5" y="19" width="11" height="11"/><rect x="19" y="19" width="11" height="11"/></g></svg>
<svg style="left:1514px;top:336px" width="15" height="10" viewBox="0 0 15 10"><path d="M1.500 2l6 6 6-6" class="chev" style="stroke-width:1.400"/></svg>

<!-- ===== texts ===== -->
<span class="t nmt" style="left:78.70px;top:115.99px;font-size:18.2px;letter-spacing:-0.465px;">Iryna LYSENKOVA</span>
<span class="t nmt" style="left:318.70px;top:115.99px;font-size:18.2px;letter-spacing:0.139px;">Маша Пулєва</span>
<span class="t nmt" style="left:585.30px;top:115.99px;font-size:18.2px;letter-spacing:0.448px;">Куропятник Дар'я</span>
<span class="t nmt" style="left:798.70px;top:115.99px;font-size:18.2px;letter-spacing:0.408px;">Гордан Масленников</span>
<span class="t nmt" style="left:1038.70px;top:115.99px;font-size:18.2px;letter-spacing:0.520px;">Аня Гончаренко</span>
<span class="t nmt" style="left:1305.30px;top:115.99px;font-size:18.2px;letter-spacing:0.081px;">Софія Шариш</span>
<span class="t" style="left:1044.20px;top:62.74px;font-size:25px;letter-spacing:0.904px;color:#fff;font-weight:bold">Аня Гончаренко</span>
<span class="t" style="left:86.40px;top:168.10px;font-size:13px;letter-spacing:-0.384px;color:#333">Автозбереження</span>
<span class="t" style="left:446.30px;top:168.07px;font-size:13.5px;letter-spacing:0.180px;color:#333">5 зустріч серійні злоч...</span>
<span class="t" style="left:608.60px;top:168.07px;font-size:13.5px;letter-spacing:0.405px;color:#333">• Збережено у цей ПК</span>
<span class="t" style="left:857.30px;top:168.30px;font-size:15px;letter-spacing:0.433px;color:#5c5c5c">Пошук</span>
<span class="t" style="left:1340.30px;top:168.84px;font-size:12px;letter-spacing:-0.986px;color:#d8f3ef">MC</span>
<span class="t" style="left:1393.50px;top:213.18px;font-size:15.5px;letter-spacing:0.009px;color:#fff;-webkit-text-stroke:.45px #fff">Спільний доступ</span>
<span class="t tab" style="left:47.00px;top:214.28px;font-size:15.5px;letter-spacing:-0.152px;">Файл</span>
<span class="t tab" style="left:201.50px;top:214.28px;font-size:15.5px;letter-spacing:-0.280px;">Вставлення</span>
<span class="t tab" style="left:312.50px;top:214.28px;font-size:15.5px;letter-spacing:0.236px;">Малювання</span>
<span class="t tab" style="left:427.00px;top:214.28px;font-size:15.5px;letter-spacing:0.328px;">Конструктор</span>
<span class="t tab" style="left:547.70px;top:214.28px;font-size:15.5px;letter-spacing:-0.042px;">Переходи</span>
<span class="t tab" style="left:646.10px;top:214.28px;font-size:15.5px;letter-spacing:0.132px;">Анімація</span>
<span class="t tab" style="left:740.20px;top:214.28px;font-size:15.5px;letter-spacing:-0.019px;">Показ слайдів</span>
<span class="t tab" style="left:871.30px;top:214.28px;font-size:15.5px;letter-spacing:-0.179px;">Записати</span>
<span class="t tab" style="left:965.80px;top:214.28px;font-size:15.5px;letter-spacing:0.013px;">Рецензування</span>
<span class="t tab" style="left:1094.00px;top:214.28px;font-size:15.5px;letter-spacing:0.170px;">Подання</span>
<span class="t tab" style="left:1185.30px;top:214.28px;font-size:15.5px;letter-spacing:0.219px;">Довідка</span>
<span class="t tab" style="left:109.50px;top:214.28px;font-size:15.5px;letter-spacing:-0.176px;font-weight:bold;color:#262626">Основне</span>
<span class="t rl" style="left:57.60px;top:291.27px;font-size:13.5px;letter-spacing:-0.379px;">Вставити</span>
<span class="t rl" style="left:197.00px;top:290.07px;font-size:13.5px;letter-spacing:0.171px;">Створити</span>
<span class="t rl" style="left:202.80px;top:309.27px;font-size:13.5px;letter-spacing:-0.553px;">слайд</span>
<span class="t rl" style="left:977.70px;top:290.27px;font-size:13.5px;letter-spacing:0.343px;">Фігури</span>
<span class="t rl" style="left:1028.90px;top:290.27px;font-size:13.5px;letter-spacing:0.399px;">Упорядкувати</span>
<span class="t rl dis" style="left:1128.50px;top:290.27px;font-size:13.5px;letter-spacing:-0.049px;">Експрес-</span>
<span class="t rl dis" style="left:1134.70px;top:309.27px;font-size:13.5px;letter-spacing:-0.312px;">стилі</span>
<span class="t rl" style="left:1293.80px;top:251.17px;font-size:13.5px;letter-spacing:-0.198px;">Знайти</span>
<span class="t rl" style="left:1293.80px;top:281.97px;font-size:13.5px;letter-spacing:0.016px;">Замінити</span>
<span class="t rl" style="left:1293.80px;top:312.57px;font-size:13.5px;letter-spacing:-0.297px;">Виділити</span>
<span class="t rl" style="left:1412.40px;top:290.07px;font-size:13.5px;letter-spacing:0.324px;">Надбудови</span>
<span class="t rl dis" style="left:533.50px;top:259.73px;font-size:14.5px;letter-spacing:-0.620px;">20</span>
<span class="t gl" style="left:65.40px;top:338.87px;font-size:12.2px;letter-spacing:-0.064px;">Буфер обміну</span>
<span class="t gl" style="left:230.70px;top:338.87px;font-size:12.2px;letter-spacing:-0.487px;">Слайди</span>
<span class="t gl" style="left:474.50px;top:338.87px;font-size:12.2px;letter-spacing:-0.142px;">Шрифт</span>
<span class="t gl" style="left:799.70px;top:338.87px;font-size:12.2px;letter-spacing:-0.061px;">Абзац</span>
<span class="t gl" style="left:1066.00px;top:338.87px;font-size:12.2px;letter-spacing:-0.022px;">Малювання</span>
<span class="t gl" style="left:1291.30px;top:338.87px;font-size:12.2px;letter-spacing:-0.120px;">Редагування</span>
<span class="t gl" style="left:1416.30px;top:338.87px;font-size:12.2px;letter-spacing:0.048px;">Надбудови</span>
<span class="t" style="left:593.60px;top:255.02px;font-size:21px;letter-spacing:-1.116px;color:#9b9b9b;">A</span>
<span class="t" style="left:626.00px;top:258.41px;font-size:17px;letter-spacing:-0.344px;color:#9b9b9b;">A</span>
<span class="t" style="left:657.30px;top:256.72px;font-size:19px;letter-spacing:-0.987px;color:#9b9b9b;">A</span>
<span class="t" style="left:336.00px;top:296.61px;font-size:17px;letter-spacing:0.425px;color:#9b9b9b;font-weight:bold;color:#8c8c8c">Ж</span>
<span class="t" style="left:369.00px;top:296.61px;font-size:17px;letter-spacing:0.469px;color:#9b9b9b;font-style:italic">К</span>
<span class="t" style="left:399.00px;top:297.03px;font-size:16.5px;letter-spacing:-0.459px;color:#9b9b9b;">П</span>
<span class="t" style="left:430.90px;top:297.26px;font-size:16px;letter-spacing:-1.772px;color:#9b9b9b;text-shadow:1px 1px 1px #ccc">S</span>
<span class="t" style="left:460.00px;top:298.95px;font-size:14px;letter-spacing:-0.289px;color:#9b9b9b;">ab</span>
<span class="t" style="left:489.50px;top:296.07px;font-size:13.5px;letter-spacing:0.492px;color:#9b9b9b;">AV</span>
<span class="t" style="left:538.90px;top:297.68px;font-size:15.5px;letter-spacing:-0.034px;color:#9b9b9b;">Aa</span>
<span class="t" style="left:643.00px;top:294.69px;font-size:17.5px;letter-spacing:0.812px;color:#9b9b9b;">A</span>
<span class="t sn" style="left:44.90px;top:427.73px;font-size:17.8px;letter-spacing:-1.891px;">5</span>
<span class="t sn" style="left:44.90px;top:536.63px;font-size:17.8px;letter-spacing:-1.691px;">6</span>
<span class="t sn" style="left:44.60px;top:645.73px;font-size:17.8px;letter-spacing:-1.691px;color:#c8472b">7</span>
<span class="t sn" style="left:44.90px;top:754.73px;font-size:17.8px;letter-spacing:-1.691px;">8</span>
<span class="t" style="left:92.00px;top:437.54px;font-size:6.8px;letter-spacing:-0.392px;color:#555;">Психологічне профілювання: Хто ховає</span>
<span class="t" style="left:134.00px;top:444.84px;font-size:6.8px;letter-spacing:-0.314px;color:#555;">темряву?</span>
<span class="t" style="left:113.50px;top:551.04px;font-size:6.8px;letter-spacing:-0.351px;color:#333">Клінічні характеристики</span>
<span class="t" style="left:89.50px;top:656.06px;font-size:5.6px;letter-spacing:-0.221px;color:#222;font-weight:bold">Топ-10 професій з найвищою концентрацією</span>
<span class="t" style="left:85.00px;top:662.86px;font-size:5.6px;letter-spacing:0.020px;color:#444">психопатичних рис (за книгою психолога Кевіна</span>
<span class="t" style="left:103.50px;top:669.46px;font-size:5.6px;letter-spacing:-0.126px;color:#555;font-style:italic">Даттона «Мудрість психопатів»</span>
<span class="t" style="left:84.50px;top:769.64px;font-size:6.8px;letter-spacing:-0.123px;color:#333">Професії з найменшим рівнем психопатії</span>
<span class="t h1" style="left:559.60px;top:398.81px;font-size:32px;letter-spacing:0.486px;-webkit-text-stroke:.35px #161616">Топ-10 <span class="wv">професій</span> з <span class="wv">найвищою концентрацією</span></span>
<span class="t h1" style="left:533.50px;top:437.81px;font-size:32px;letter-spacing:0.591px;color:#303030"><span class="wv" style="color:#161616;-webkit-text-stroke:.35px #161616">психопатичних</span> <span style="color:#161616;-webkit-text-stroke:.35px #161616">рис</span> (за книгою психолога <span class="wv">Кевіна</span></span>
<span class="t h1" style="left:644.00px;top:476.91px;font-size:32px;letter-spacing:0.718px;color:#303030">Даттона <i>«<span class="wv">Мудрість психопатів</span>»</i></span>
<span class="t bt" style="left:800.60px;top:539.61px;font-size:16px;letter-spacing:0.039px;">СЕО / Директори компаній</span>
<span class="t bt" style="left:864.70px;top:571.23px;font-size:16px;letter-spacing:0.026px;">Адвокати</span>
<span class="t bt" style="left:785.30px;top:602.85px;font-size:16px;letter-spacing:-0.030px;">Працівники медіа (ТБ та радіо)</span>
<span class="t bt" style="left:814.70px;top:634.47px;font-size:16px;letter-spacing:-0.074px;">Спеціалісти з продажів</span>
<span class="t bt" style="left:872.50px;top:666.09px;font-size:16px;letter-spacing:-0.062px;">Хірурги</span>
<span class="t bt" style="left:857.50px;top:697.71px;font-size:16px;letter-spacing:-0.190px;">Журналісти</span>
<span class="t bt" style="left:842.20px;top:729.33px;font-size:16px;letter-spacing:-0.086px;">Офіцери поліції</span>
<span class="t bt" style="left:825.10px;top:760.95px;font-size:16px;letter-spacing:-0.127px;">Священнослужителі</span>
<span class="t bt" style="left:857.50px;top:792.57px;font-size:16px;letter-spacing:-0.171px;">Шеф-кухарі</span>
<span class="t bt" style="left:775.10px;top:824.19px;font-size:16px;letter-spacing:0.209px;">Державні службовці / Чиновники</span>
</div>
</body>
</html>
